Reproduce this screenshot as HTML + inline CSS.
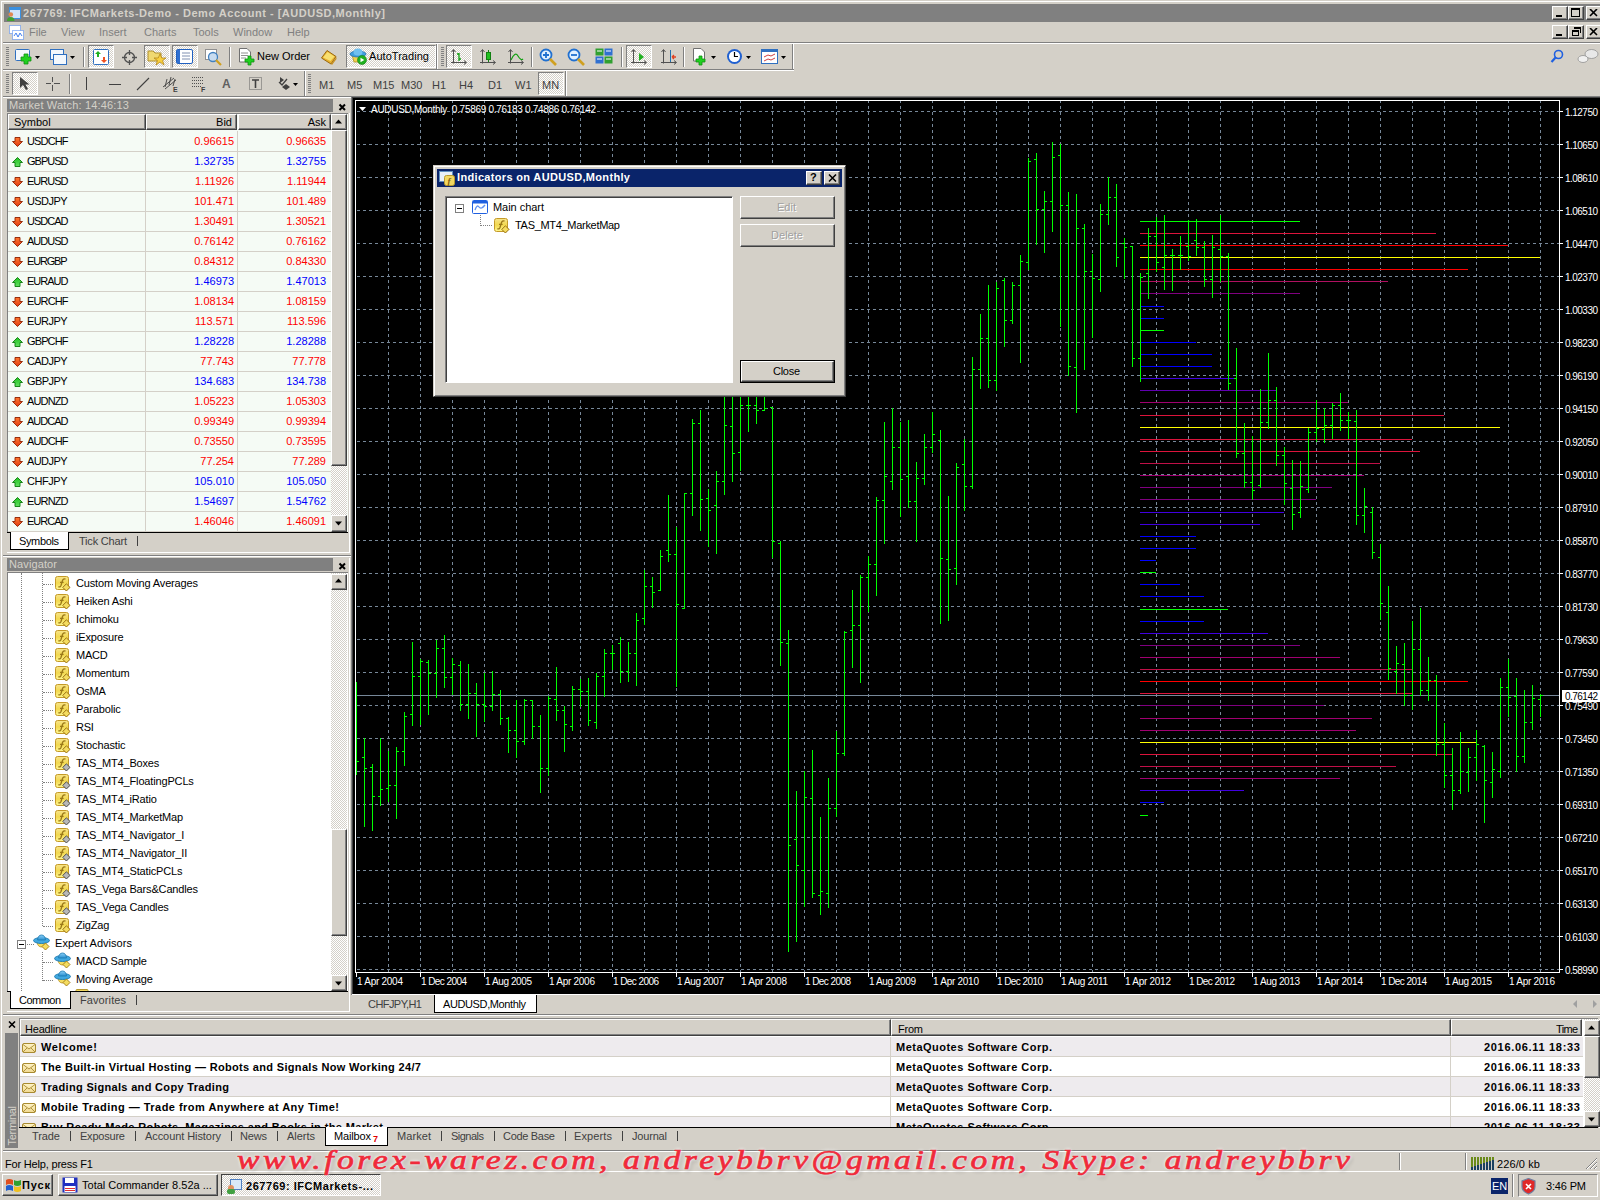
<!DOCTYPE html><html><head><meta charset="utf-8"><style>
html,body{margin:0;padding:0;}
body{width:1600px;height:1200px;position:relative;overflow:hidden;background:#d4d0c8;font-family:"Liberation Sans",sans-serif;font-size:11px;color:#000;}
.t{position:absolute;white-space:nowrap;line-height:13px;}
svg{position:absolute;}
</style></head><body>
<svg width="0" height="0" style="position:absolute"><defs>
<linearGradient id="gy" x1="0" y1="0" x2="0" y2="1"><stop offset="0" stop-color="#f8e48a"/><stop offset="0.5" stop-color="#f2d850"/><stop offset="1" stop-color="#fff890"/></linearGradient>
<linearGradient id="gr" x1="0" y1="0" x2="0" y2="1"><stop offset="0" stop-color="#ff7a30"/><stop offset="1" stop-color="#e03a10"/></linearGradient>
<linearGradient id="gg" x1="0" y1="0" x2="0" y2="1"><stop offset="0" stop-color="#20c020"/><stop offset="1" stop-color="#60e060"/></linearGradient>
<linearGradient id="gb" x1="0" y1="0" x2="0" y2="1"><stop offset="0" stop-color="#8cd0f8"/><stop offset="1" stop-color="#2a90d0"/></linearGradient>
<linearGradient id="ge" x1="0" y1="0" x2="0" y2="1"><stop offset="0" stop-color="#fff4c8"/><stop offset="1" stop-color="#f0d890"/></linearGradient>
</defs></svg>
<div style="position:absolute;left:0px;top:0px;width:1600px;height:1px;background:#d4d0c8;"></div>
<div style="position:absolute;left:1px;top:1px;width:1599px;height:1px;background:#fff;"></div>
<div style="position:absolute;left:1px;top:1px;width:1px;height:1170px;background:#fff;"></div>
<div style="position:absolute;left:4px;top:4px;width:1596px;height:18px;background:#808080;"></div>
<svg style="left:7px;top:6px" width="15" height="15"><rect x="2.5" y="1.5" width="11" height="11" fill="#d0e4f8" stroke="#3a90e0"/><rect x="3" y="2" width="10" height="2" fill="#3a90e0"/><circle cx="3.8" cy="8.5" r="2.3" fill="#e08850"/><path d="M0 15Q0 11 3.8 11Q7.5 11 7.5 15Z" fill="#40a030"/></svg>
<svg style="left:9px;top:25px" width="15" height="15"><rect x="0.5" y="0.5" width="11" height="8" fill="#fff" stroke="#4080f0" stroke-dasharray="1 1"/><rect x="3.5" y="5.5" width="11" height="9" fill="#fff" stroke="#4080f0" stroke-dasharray="1 1"/><path d="M5 11L7 8L9 12L11 8L13 11" stroke="#4080f0" fill="none"/></svg>
<div class="t" style="left:23px;top:7px;letter-spacing:0.512px;font-weight:bold;color:#d4d0c8;">267769: IFCMarkets-Demo - Demo Account - [AUDUSD,Monthly]</div>
<div style="position:absolute;left:1552px;top:6px;width:16px;height:14px;background:#d4d0c8;border-top:1px solid #fff;border-left:1px solid #fff;border-right:1px solid #404040;border-bottom:1px solid #404040;box-sizing:border-box;box-shadow:inset -1px -1px 0 #808080;"></div>
<div style="position:absolute;left:1568px;top:6px;width:16px;height:14px;background:#d4d0c8;border-top:1px solid #fff;border-left:1px solid #fff;border-right:1px solid #404040;border-bottom:1px solid #404040;box-sizing:border-box;box-shadow:inset -1px -1px 0 #808080;"></div>
<div style="position:absolute;left:1586px;top:6px;width:16px;height:14px;background:#d4d0c8;border-top:1px solid #fff;border-left:1px solid #fff;border-right:1px solid #404040;border-bottom:1px solid #404040;box-sizing:border-box;box-shadow:inset -1px -1px 0 #808080;"></div>
<div style="position:absolute;left:1556px;top:15px;width:6px;height:2px;background:#000;"></div>
<div style="position:absolute;left:1571px;top:8px;width:9px;height:9px;border:1px solid #000;border-top-width:2px;box-sizing:border-box;"></div>
<svg style="left:1589px;top:9px" width="10" height="8"><path d="M1 0L8 7M8 0L1 7" stroke="#000" stroke-width="1.6"/></svg>
<div class="t" style="left:29px;top:26px;color:#808080;">File</div>
<div class="t" style="left:61px;top:26px;color:#808080;">View</div>
<div class="t" style="left:99px;top:26px;color:#808080;">Insert</div>
<div class="t" style="left:144px;top:26px;color:#808080;">Charts</div>
<div class="t" style="left:193px;top:26px;color:#808080;">Tools</div>
<div class="t" style="left:233px;top:26px;color:#808080;">Window</div>
<div class="t" style="left:287px;top:26px;color:#808080;">Help</div>
<div style="position:absolute;left:1552px;top:25px;width:16px;height:14px;background:#d4d0c8;border-top:1px solid #fff;border-left:1px solid #fff;border-right:1px solid #404040;border-bottom:1px solid #404040;box-sizing:border-box;box-shadow:inset -1px -1px 0 #808080;"></div>
<div style="position:absolute;left:1568px;top:25px;width:16px;height:14px;background:#d4d0c8;border-top:1px solid #fff;border-left:1px solid #fff;border-right:1px solid #404040;border-bottom:1px solid #404040;box-sizing:border-box;box-shadow:inset -1px -1px 0 #808080;"></div>
<div style="position:absolute;left:1586px;top:25px;width:16px;height:14px;background:#d4d0c8;border-top:1px solid #fff;border-left:1px solid #fff;border-right:1px solid #404040;border-bottom:1px solid #404040;box-sizing:border-box;box-shadow:inset -1px -1px 0 #808080;"></div>
<div style="position:absolute;left:1556px;top:34px;width:6px;height:2px;background:#000;"></div>
<div style="position:absolute;left:1572px;top:30px;width:7px;height:6px;border:1px solid #000;border-top-width:2px;box-sizing:border-box;"></div>
<div style="position:absolute;left:1574px;top:27px;width:7px;height:6px;border:1px solid #000;border-top-width:2px;box-sizing:border-box;border-left:none;border-bottom:none;"></div>
<svg style="left:1589px;top:28px" width="10" height="8"><path d="M1 0L8 7M8 0L1 7" stroke="#000" stroke-width="1.6"/></svg>
<div style="position:absolute;left:3px;top:42px;width:1597px;height:1px;background:#808080;"></div>
<div style="position:absolute;left:3px;top:43px;width:1597px;height:1px;background:#fff;"></div>
<div style="position:absolute;left:3px;top:69px;width:791px;height:1px;background:#808080;"></div>
<div style="position:absolute;left:3px;top:70px;width:791px;height:1px;background:#fff;"></div>
<div style="position:absolute;left:3px;top:96px;width:1597px;height:1px;background:#808080;"></div>
<div style="position:absolute;left:3px;top:97px;width:349px;height:1px;background:#fff;"></div>
<div style="position:absolute;left:3px;top:98px;width:349px;height:456px;background:#d4d0c8;"></div>
<div style="position:absolute;left:7px;top:99px;width:326px;height:13px;background:#808080;"></div>
<div class="t" style="left:9px;top:99px;letter-spacing:0.168px;color:#d4d0c8;">Market Watch: 14:46:13</div>
<svg style="left:338px;top:103px" width="9" height="8"><path d="M1.5 1.5L7 7M7 1.5L1.5 7" stroke="#000" stroke-width="2"/></svg>
<div style="position:absolute;left:7px;top:113px;width:341px;height:419px;background:#f5fbf5;border-left:1px solid #808080;border-top:1px solid #808080;box-sizing:border-box;"></div>
<div style="position:absolute;left:8px;top:114px;width:138px;height:16px;background:#d4d0c8;border-top:1px solid #fff;border-left:1px solid #fff;border-right:1px solid #404040;border-bottom:1px solid #404040;box-sizing:border-box;box-shadow:inset -1px -1px 0 #808080;"></div>
<div style="position:absolute;left:146px;top:114px;width:91px;height:16px;background:#d4d0c8;border-top:1px solid #fff;border-left:1px solid #fff;border-right:1px solid #404040;border-bottom:1px solid #404040;box-sizing:border-box;box-shadow:inset -1px -1px 0 #808080;"></div>
<div style="position:absolute;left:238px;top:114px;width:93px;height:16px;background:#d4d0c8;border-top:1px solid #fff;border-left:1px solid #fff;border-right:1px solid #404040;border-bottom:1px solid #404040;box-sizing:border-box;box-shadow:inset -1px -1px 0 #808080;"></div>
<div class="t" style="left:14px;top:116px;">Symbol</div>
<div class="t" style="left:146px;top:116px;width:86px;text-align:right;">Bid</div>
<div class="t" style="left:238px;top:116px;width:88px;text-align:right;">Ask</div>
<div style="position:absolute;left:8px;top:151px;width:323px;height:1px;background:#d4d0c8;"></div>
<svg style="left:12px;top:137px" width="12" height="11"><path d="M5.5 9.5L10.5 4.5H8V0.5H3V4.5H0.5Z" fill="url(#gr)" stroke="#902000" stroke-width="0.9"/></svg>
<div class="t" style="left:27px;top:135px;letter-spacing:-0.863px;">USDCHF</div>
<div class="t" style="left:146px;top:135px;width:88px;text-align:right;color:#ff0000;">0.96615</div>
<div class="t" style="left:238px;top:135px;width:88px;text-align:right;color:#ff0000;">0.96635</div>
<div style="position:absolute;left:8px;top:171px;width:323px;height:1px;background:#d4d0c8;"></div>
<svg style="left:12px;top:157px" width="12" height="11"><path d="M5.5 0.5L10.5 5.5H8V9.5H3V5.5H0.5Z" fill="url(#gg)" stroke="#0a7a0a" stroke-width="0.9"/></svg>
<div class="t" style="left:27px;top:155px;letter-spacing:-0.994px;">GBPUSD</div>
<div class="t" style="left:146px;top:155px;width:88px;text-align:right;color:#0000ff;">1.32735</div>
<div class="t" style="left:238px;top:155px;width:88px;text-align:right;color:#0000ff;">1.32755</div>
<div style="position:absolute;left:8px;top:191px;width:323px;height:1px;background:#d4d0c8;"></div>
<svg style="left:12px;top:177px" width="12" height="11"><path d="M5.5 9.5L10.5 4.5H8V0.5H3V4.5H0.5Z" fill="url(#gr)" stroke="#902000" stroke-width="0.9"/></svg>
<div class="t" style="left:27px;top:175px;letter-spacing:-0.988px;">EURUSD</div>
<div class="t" style="left:146px;top:175px;width:88px;text-align:right;color:#ff0000;">1.11926</div>
<div class="t" style="left:238px;top:175px;width:88px;text-align:right;color:#ff0000;">1.11944</div>
<div style="position:absolute;left:8px;top:211px;width:323px;height:1px;background:#d4d0c8;"></div>
<svg style="left:12px;top:197px" width="12" height="11"><path d="M5.5 9.5L10.5 4.5H8V0.5H3V4.5H0.5Z" fill="url(#gr)" stroke="#902000" stroke-width="0.9"/></svg>
<div class="t" style="left:27px;top:195px;letter-spacing:-0.581px;">USDJPY</div>
<div class="t" style="left:146px;top:195px;width:88px;text-align:right;color:#ff0000;">101.471</div>
<div class="t" style="left:238px;top:195px;width:88px;text-align:right;color:#ff0000;">101.489</div>
<div style="position:absolute;left:8px;top:231px;width:323px;height:1px;background:#d4d0c8;"></div>
<svg style="left:12px;top:217px" width="12" height="11"><path d="M5.5 9.5L10.5 4.5H8V0.5H3V4.5H0.5Z" fill="url(#gr)" stroke="#902000" stroke-width="0.9"/></svg>
<div class="t" style="left:27px;top:215px;letter-spacing:-0.988px;">USDCAD</div>
<div class="t" style="left:146px;top:215px;width:88px;text-align:right;color:#ff0000;">1.30491</div>
<div class="t" style="left:238px;top:215px;width:88px;text-align:right;color:#ff0000;">1.30521</div>
<div style="position:absolute;left:8px;top:251px;width:323px;height:1px;background:#d4d0c8;"></div>
<svg style="left:12px;top:237px" width="12" height="11"><path d="M5.5 9.5L10.5 4.5H8V0.5H3V4.5H0.5Z" fill="url(#gr)" stroke="#902000" stroke-width="0.9"/></svg>
<div class="t" style="left:27px;top:235px;letter-spacing:-0.988px;">AUDUSD</div>
<div class="t" style="left:146px;top:235px;width:88px;text-align:right;color:#ff0000;">0.76142</div>
<div class="t" style="left:238px;top:235px;width:88px;text-align:right;color:#ff0000;">0.76162</div>
<div style="position:absolute;left:8px;top:271px;width:323px;height:1px;background:#d4d0c8;"></div>
<svg style="left:12px;top:257px" width="12" height="11"><path d="M5.5 9.5L10.5 4.5H8V0.5H3V4.5H0.5Z" fill="url(#gr)" stroke="#902000" stroke-width="0.9"/></svg>
<div class="t" style="left:27px;top:255px;letter-spacing:-1.194px;">EURGBP</div>
<div class="t" style="left:146px;top:255px;width:88px;text-align:right;color:#ff0000;">0.84312</div>
<div class="t" style="left:238px;top:255px;width:88px;text-align:right;color:#ff0000;">0.84330</div>
<div style="position:absolute;left:8px;top:291px;width:323px;height:1px;background:#d4d0c8;"></div>
<svg style="left:12px;top:277px" width="12" height="11"><path d="M5.5 0.5L10.5 5.5H8V9.5H3V5.5H0.5Z" fill="url(#gg)" stroke="#0a7a0a" stroke-width="0.9"/></svg>
<div class="t" style="left:27px;top:275px;letter-spacing:-0.988px;">EURAUD</div>
<div class="t" style="left:146px;top:275px;width:88px;text-align:right;color:#0000ff;">1.46973</div>
<div class="t" style="left:238px;top:275px;width:88px;text-align:right;color:#0000ff;">1.47013</div>
<div style="position:absolute;left:8px;top:311px;width:323px;height:1px;background:#d4d0c8;"></div>
<svg style="left:12px;top:297px" width="12" height="11"><path d="M5.5 9.5L10.5 4.5H8V0.5H3V4.5H0.5Z" fill="url(#gr)" stroke="#902000" stroke-width="0.9"/></svg>
<div class="t" style="left:27px;top:295px;letter-spacing:-0.863px;">EURCHF</div>
<div class="t" style="left:146px;top:295px;width:88px;text-align:right;color:#ff0000;">1.08134</div>
<div class="t" style="left:238px;top:295px;width:88px;text-align:right;color:#ff0000;">1.08159</div>
<div style="position:absolute;left:8px;top:331px;width:323px;height:1px;background:#d4d0c8;"></div>
<svg style="left:12px;top:317px" width="12" height="11"><path d="M5.5 9.5L10.5 4.5H8V0.5H3V4.5H0.5Z" fill="url(#gr)" stroke="#902000" stroke-width="0.9"/></svg>
<div class="t" style="left:27px;top:315px;letter-spacing:-0.581px;">EURJPY</div>
<div class="t" style="left:146px;top:315px;width:88px;text-align:right;color:#ff0000;">113.571</div>
<div class="t" style="left:238px;top:315px;width:88px;text-align:right;color:#ff0000;">113.596</div>
<div style="position:absolute;left:8px;top:351px;width:323px;height:1px;background:#d4d0c8;"></div>
<svg style="left:12px;top:337px" width="12" height="11"><path d="M5.5 0.5L10.5 5.5H8V9.5H3V5.5H0.5Z" fill="url(#gg)" stroke="#0a7a0a" stroke-width="0.9"/></svg>
<div class="t" style="left:27px;top:335px;letter-spacing:-0.869px;">GBPCHF</div>
<div class="t" style="left:146px;top:335px;width:88px;text-align:right;color:#0000ff;">1.28228</div>
<div class="t" style="left:238px;top:335px;width:88px;text-align:right;color:#0000ff;">1.28288</div>
<div style="position:absolute;left:8px;top:371px;width:323px;height:1px;background:#d4d0c8;"></div>
<svg style="left:12px;top:357px" width="12" height="11"><path d="M5.5 9.5L10.5 4.5H8V0.5H3V4.5H0.5Z" fill="url(#gr)" stroke="#902000" stroke-width="0.9"/></svg>
<div class="t" style="left:27px;top:355px;letter-spacing:-0.581px;">CADJPY</div>
<div class="t" style="left:146px;top:355px;width:88px;text-align:right;color:#ff0000;">77.743</div>
<div class="t" style="left:238px;top:355px;width:88px;text-align:right;color:#ff0000;">77.778</div>
<div style="position:absolute;left:8px;top:391px;width:323px;height:1px;background:#d4d0c8;"></div>
<svg style="left:12px;top:377px" width="12" height="11"><path d="M5.5 0.5L10.5 5.5H8V9.5H3V5.5H0.5Z" fill="url(#gg)" stroke="#0a7a0a" stroke-width="0.9"/></svg>
<div class="t" style="left:27px;top:375px;letter-spacing:-0.588px;">GBPJPY</div>
<div class="t" style="left:146px;top:375px;width:88px;text-align:right;color:#0000ff;">134.683</div>
<div class="t" style="left:238px;top:375px;width:88px;text-align:right;color:#0000ff;">134.738</div>
<div style="position:absolute;left:8px;top:411px;width:323px;height:1px;background:#d4d0c8;"></div>
<svg style="left:12px;top:397px" width="12" height="11"><path d="M5.5 9.5L10.5 4.5H8V0.5H3V4.5H0.5Z" fill="url(#gr)" stroke="#902000" stroke-width="0.9"/></svg>
<div class="t" style="left:27px;top:395px;letter-spacing:-0.863px;">AUDNZD</div>
<div class="t" style="left:146px;top:395px;width:88px;text-align:right;color:#ff0000;">1.05223</div>
<div class="t" style="left:238px;top:395px;width:88px;text-align:right;color:#ff0000;">1.05303</div>
<div style="position:absolute;left:8px;top:431px;width:323px;height:1px;background:#d4d0c8;"></div>
<svg style="left:12px;top:417px" width="12" height="11"><path d="M5.5 9.5L10.5 4.5H8V0.5H3V4.5H0.5Z" fill="url(#gr)" stroke="#902000" stroke-width="0.9"/></svg>
<div class="t" style="left:27px;top:415px;letter-spacing:-0.988px;">AUDCAD</div>
<div class="t" style="left:146px;top:415px;width:88px;text-align:right;color:#ff0000;">0.99349</div>
<div class="t" style="left:238px;top:415px;width:88px;text-align:right;color:#ff0000;">0.99394</div>
<div style="position:absolute;left:8px;top:451px;width:323px;height:1px;background:#d4d0c8;"></div>
<svg style="left:12px;top:437px" width="12" height="11"><path d="M5.5 9.5L10.5 4.5H8V0.5H3V4.5H0.5Z" fill="url(#gr)" stroke="#902000" stroke-width="0.9"/></svg>
<div class="t" style="left:27px;top:435px;letter-spacing:-0.863px;">AUDCHF</div>
<div class="t" style="left:146px;top:435px;width:88px;text-align:right;color:#ff0000;">0.73550</div>
<div class="t" style="left:238px;top:435px;width:88px;text-align:right;color:#ff0000;">0.73595</div>
<div style="position:absolute;left:8px;top:471px;width:323px;height:1px;background:#d4d0c8;"></div>
<svg style="left:12px;top:457px" width="12" height="11"><path d="M5.5 9.5L10.5 4.5H8V0.5H3V4.5H0.5Z" fill="url(#gr)" stroke="#902000" stroke-width="0.9"/></svg>
<div class="t" style="left:27px;top:455px;letter-spacing:-0.581px;">AUDJPY</div>
<div class="t" style="left:146px;top:455px;width:88px;text-align:right;color:#ff0000;">77.254</div>
<div class="t" style="left:238px;top:455px;width:88px;text-align:right;color:#ff0000;">77.289</div>
<div style="position:absolute;left:8px;top:491px;width:323px;height:1px;background:#d4d0c8;"></div>
<svg style="left:12px;top:477px" width="12" height="11"><path d="M5.5 0.5L10.5 5.5H8V9.5H3V5.5H0.5Z" fill="url(#gg)" stroke="#0a7a0a" stroke-width="0.9"/></svg>
<div class="t" style="left:27px;top:475px;letter-spacing:-0.456px;">CHFJPY</div>
<div class="t" style="left:146px;top:475px;width:88px;text-align:right;color:#0000ff;">105.010</div>
<div class="t" style="left:238px;top:475px;width:88px;text-align:right;color:#0000ff;">105.050</div>
<div style="position:absolute;left:8px;top:511px;width:323px;height:1px;background:#d4d0c8;"></div>
<svg style="left:12px;top:497px" width="12" height="11"><path d="M5.5 0.5L10.5 5.5H8V9.5H3V5.5H0.5Z" fill="url(#gg)" stroke="#0a7a0a" stroke-width="0.9"/></svg>
<div class="t" style="left:27px;top:495px;letter-spacing:-0.863px;">EURNZD</div>
<div class="t" style="left:146px;top:495px;width:88px;text-align:right;color:#0000ff;">1.54697</div>
<div class="t" style="left:238px;top:495px;width:88px;text-align:right;color:#0000ff;">1.54762</div>
<div style="position:absolute;left:8px;top:531px;width:323px;height:1px;background:#d4d0c8;"></div>
<svg style="left:12px;top:517px" width="12" height="11"><path d="M5.5 9.5L10.5 4.5H8V0.5H3V4.5H0.5Z" fill="url(#gr)" stroke="#902000" stroke-width="0.9"/></svg>
<div class="t" style="left:27px;top:515px;letter-spacing:-0.988px;">EURCAD</div>
<div class="t" style="left:146px;top:515px;width:88px;text-align:right;color:#ff0000;">1.46046</div>
<div class="t" style="left:238px;top:515px;width:88px;text-align:right;color:#ff0000;">1.46091</div>
<div style="position:absolute;left:145px;top:131px;width:1px;height:400px;background:#d4d0c8;"></div>
<div style="position:absolute;left:237px;top:131px;width:1px;height:400px;background:#d4d0c8;"></div>
<div style="position:absolute;left:331px;top:114px;width:16px;height:417px;background-color:#d4d0c8;background-image:linear-gradient(45deg,#fff 25%,transparent 25%,transparent 75%,#fff 75%),linear-gradient(45deg,#fff 25%,transparent 25%,transparent 75%,#fff 75%);background-size:2px 2px;background-position:0 0,1px 1px;"></div>
<div style="position:absolute;left:331px;top:114px;width:16px;height:16px;background:#d4d0c8;border-top:1px solid #fff;border-left:1px solid #fff;border-right:1px solid #404040;border-bottom:1px solid #404040;box-sizing:border-box;box-shadow:inset -1px -1px 0 #808080;"></div>
<svg style="left:335px;top:119px" width="8" height="5"><path d="M0 4.5H7L3.5 0.5Z" fill="#000"/></svg>
<div style="position:absolute;left:331px;top:130px;width:16px;height:336px;background:#d4d0c8;border-top:1px solid #fff;border-left:1px solid #fff;border-right:1px solid #404040;border-bottom:1px solid #404040;box-sizing:border-box;box-shadow:inset -1px -1px 0 #808080;"></div>
<div style="position:absolute;left:331px;top:515px;width:16px;height:17px;background:#d4d0c8;border-top:1px solid #fff;border-left:1px solid #fff;border-right:1px solid #404040;border-bottom:1px solid #404040;box-sizing:border-box;box-shadow:inset -1px -1px 0 #808080;"></div>
<svg style="left:335px;top:521px" width="8" height="5"><path d="M0 0.5H7L3.5 4.5Z" fill="#000"/></svg>
<div style="position:absolute;left:7px;top:532px;width:341px;height:1px;background:#000;"></div>
<div style="position:absolute;left:10px;top:532px;width:59px;height:18px;background:#fff;border:1px solid #000;border-top:none;box-sizing:border-box;"></div>
<div class="t" style="left:19px;top:535px;letter-spacing:-0.365px;">Symbols</div>
<div class="t" style="left:79px;top:535px;letter-spacing:-0.191px;color:#404040;">Tick Chart</div>
<div style="position:absolute;left:137px;top:536px;width:1px;height:10px;background:#404040;"></div>
<div style="position:absolute;left:7px;top:552px;width:343px;height:1px;background:#fff;"></div>
<div style="position:absolute;left:349px;top:113px;width:1px;height:440px;background:#fff;"></div>
<div style="position:absolute;left:3px;top:555px;width:349px;height:1px;background:#808080;"></div>
<div style="position:absolute;left:3px;top:556px;width:349px;height:1px;background:#fff;"></div>
<div style="position:absolute;left:7px;top:558px;width:326px;height:13px;background:#808080;"></div>
<div class="t" style="left:9px;top:558px;letter-spacing:0.113px;color:#d4d0c8;">Navigator</div>
<svg style="left:338px;top:562px" width="9" height="8"><path d="M1.5 1.5L7 7M7 1.5L1.5 7" stroke="#000" stroke-width="2"/></svg>
<div style="position:absolute;left:7px;top:572px;width:341px;height:420px;background:#fff;border-left:1px solid #808080;border-top:1px solid #808080;box-sizing:border-box;"></div>
<div style="position:absolute;left:21px;top:573px;width:1px;height:366px;border-left:1px dotted #808080;"></div>
<div style="position:absolute;left:21px;top:950px;width:1px;height:41px;border-left:1px dotted #808080;"></div>
<div style="position:absolute;left:42px;top:573px;width:1px;height:353px;border-left:1px dotted #808080;"></div>
<div style="position:absolute;left:42px;top:952px;width:1px;height:29px;border-left:1px dotted #808080;"></div>
<div style="position:absolute;left:43px;top:584px;width:10px;height:1px;border-top:1px dotted #808080;"></div>
<svg style="left:54px;top:575px" width="18" height="18"><rect x="1.5" y="1.5" width="13" height="13" rx="2" fill="url(#gy)" stroke="#c49a28"/><path d="M11.5 4.2Q9.3 3.3 8.4 5.8L7 10.5Q6.3 12.6 4.4 11.6M6 7.4H9.6" stroke="#9a7818" stroke-width="1.3" fill="none"/><path d="M12.4 8.8L16 12.4L12.4 16L8.8 12.4Z" fill="#f4dc60" stroke="#9a7010" stroke-width="1"/></svg>
<div class="t" style="left:76px;top:577px;letter-spacing:-0.148px;">Custom Moving Averages</div>
<div style="position:absolute;left:43px;top:602px;width:10px;height:1px;border-top:1px dotted #808080;"></div>
<svg style="left:54px;top:593px" width="18" height="18"><rect x="1.5" y="1.5" width="13" height="13" rx="2" fill="url(#gy)" stroke="#c49a28"/><path d="M11.5 4.2Q9.3 3.3 8.4 5.8L7 10.5Q6.3 12.6 4.4 11.6M6 7.4H9.6" stroke="#9a7818" stroke-width="1.3" fill="none"/><path d="M12.4 8.8L16 12.4L12.4 16L8.8 12.4Z" fill="#f4dc60" stroke="#9a7010" stroke-width="1"/></svg>
<div class="t" style="left:76px;top:595px;letter-spacing:-0.143px;">Heiken Ashi</div>
<div style="position:absolute;left:43px;top:620px;width:10px;height:1px;border-top:1px dotted #808080;"></div>
<svg style="left:54px;top:611px" width="18" height="18"><rect x="1.5" y="1.5" width="13" height="13" rx="2" fill="url(#gy)" stroke="#c49a28"/><path d="M11.5 4.2Q9.3 3.3 8.4 5.8L7 10.5Q6.3 12.6 4.4 11.6M6 7.4H9.6" stroke="#9a7818" stroke-width="1.3" fill="none"/><path d="M12.4 8.8L16 12.4L12.4 16L8.8 12.4Z" fill="#f4dc60" stroke="#9a7010" stroke-width="1"/></svg>
<div class="t" style="left:76px;top:613px;letter-spacing:-0.154px;">Ichimoku</div>
<div style="position:absolute;left:43px;top:638px;width:10px;height:1px;border-top:1px dotted #808080;"></div>
<svg style="left:54px;top:629px" width="18" height="18"><rect x="1.5" y="1.5" width="13" height="13" rx="2" fill="url(#gy)" stroke="#c49a28"/><path d="M11.5 4.2Q9.3 3.3 8.4 5.8L7 10.5Q6.3 12.6 4.4 11.6M6 7.4H9.6" stroke="#9a7818" stroke-width="1.3" fill="none"/><path d="M12.4 8.8L16 12.4L12.4 16L8.8 12.4Z" fill="#f4dc60" stroke="#9a7010" stroke-width="1"/></svg>
<div class="t" style="left:76px;top:631px;letter-spacing:-0.150px;">iExposure</div>
<div style="position:absolute;left:43px;top:656px;width:10px;height:1px;border-top:1px dotted #808080;"></div>
<svg style="left:54px;top:647px" width="18" height="18"><rect x="1.5" y="1.5" width="13" height="13" rx="2" fill="url(#gy)" stroke="#c49a28"/><path d="M11.5 4.2Q9.3 3.3 8.4 5.8L7 10.5Q6.3 12.6 4.4 11.6M6 7.4H9.6" stroke="#9a7818" stroke-width="1.3" fill="none"/><path d="M12.4 8.8L16 12.4L12.4 16L8.8 12.4Z" fill="#f4dc60" stroke="#9a7010" stroke-width="1"/></svg>
<div class="t" style="left:76px;top:649px;letter-spacing:-0.261px;">MACD</div>
<div style="position:absolute;left:43px;top:674px;width:10px;height:1px;border-top:1px dotted #808080;"></div>
<svg style="left:54px;top:665px" width="18" height="18"><rect x="1.5" y="1.5" width="13" height="13" rx="2" fill="url(#gy)" stroke="#c49a28"/><path d="M11.5 4.2Q9.3 3.3 8.4 5.8L7 10.5Q6.3 12.6 4.4 11.6M6 7.4H9.6" stroke="#9a7818" stroke-width="1.3" fill="none"/><path d="M12.4 8.8L16 12.4L12.4 16L8.8 12.4Z" fill="#f4dc60" stroke="#9a7010" stroke-width="1"/></svg>
<div class="t" style="left:76px;top:667px;letter-spacing:-0.193px;">Momentum</div>
<div style="position:absolute;left:43px;top:692px;width:10px;height:1px;border-top:1px dotted #808080;"></div>
<svg style="left:54px;top:683px" width="18" height="18"><rect x="1.5" y="1.5" width="13" height="13" rx="2" fill="url(#gy)" stroke="#c49a28"/><path d="M11.5 4.2Q9.3 3.3 8.4 5.8L7 10.5Q6.3 12.6 4.4 11.6M6 7.4H9.6" stroke="#9a7818" stroke-width="1.3" fill="none"/><path d="M12.4 8.8L16 12.4L12.4 16L8.8 12.4Z" fill="#f4dc60" stroke="#9a7010" stroke-width="1"/></svg>
<div class="t" style="left:76px;top:685px;letter-spacing:-0.246px;">OsMA</div>
<div style="position:absolute;left:43px;top:710px;width:10px;height:1px;border-top:1px dotted #808080;"></div>
<svg style="left:54px;top:701px" width="18" height="18"><rect x="1.5" y="1.5" width="13" height="13" rx="2" fill="url(#gy)" stroke="#c49a28"/><path d="M11.5 4.2Q9.3 3.3 8.4 5.8L7 10.5Q6.3 12.6 4.4 11.6M6 7.4H9.6" stroke="#9a7818" stroke-width="1.3" fill="none"/><path d="M12.4 8.8L16 12.4L12.4 16L8.8 12.4Z" fill="#f4dc60" stroke="#9a7010" stroke-width="1"/></svg>
<div class="t" style="left:76px;top:703px;letter-spacing:-0.140px;">Parabolic</div>
<div style="position:absolute;left:43px;top:728px;width:10px;height:1px;border-top:1px dotted #808080;"></div>
<svg style="left:54px;top:719px" width="18" height="18"><rect x="1.5" y="1.5" width="13" height="13" rx="2" fill="url(#gy)" stroke="#c49a28"/><path d="M11.5 4.2Q9.3 3.3 8.4 5.8L7 10.5Q6.3 12.6 4.4 11.6M6 7.4H9.6" stroke="#9a7818" stroke-width="1.3" fill="none"/><path d="M12.4 8.8L16 12.4L12.4 16L8.8 12.4Z" fill="#f4dc60" stroke="#9a7010" stroke-width="1"/></svg>
<div class="t" style="left:76px;top:721px;letter-spacing:-0.217px;">RSI</div>
<div style="position:absolute;left:43px;top:746px;width:10px;height:1px;border-top:1px dotted #808080;"></div>
<svg style="left:54px;top:737px" width="18" height="18"><rect x="1.5" y="1.5" width="13" height="13" rx="2" fill="url(#gy)" stroke="#c49a28"/><path d="M11.5 4.2Q9.3 3.3 8.4 5.8L7 10.5Q6.3 12.6 4.4 11.6M6 7.4H9.6" stroke="#9a7818" stroke-width="1.3" fill="none"/><path d="M12.4 8.8L16 12.4L12.4 16L8.8 12.4Z" fill="#f4dc60" stroke="#9a7010" stroke-width="1"/></svg>
<div class="t" style="left:76px;top:739px;letter-spacing:-0.138px;">Stochastic</div>
<div style="position:absolute;left:43px;top:764px;width:10px;height:1px;border-top:1px dotted #808080;"></div>
<svg style="left:54px;top:755px" width="18" height="18"><rect x="1.5" y="1.5" width="13" height="13" rx="2" fill="url(#gy)" stroke="#c49a28"/><path d="M11.5 4.2Q9.3 3.3 8.4 5.8L7 10.5Q6.3 12.6 4.4 11.6M6 7.4H9.6" stroke="#9a7818" stroke-width="1.3" fill="none"/><path d="M12.4 8.8L16 12.4L12.4 16L8.8 12.4Z" fill="#b8b8b8" stroke="#505050" stroke-width="1"/></svg>
<div class="t" style="left:76px;top:757px;letter-spacing:-0.176px;">TAS_MT4_Boxes</div>
<div style="position:absolute;left:43px;top:782px;width:10px;height:1px;border-top:1px dotted #808080;"></div>
<svg style="left:54px;top:773px" width="18" height="18"><rect x="1.5" y="1.5" width="13" height="13" rx="2" fill="url(#gy)" stroke="#c49a28"/><path d="M11.5 4.2Q9.3 3.3 8.4 5.8L7 10.5Q6.3 12.6 4.4 11.6M6 7.4H9.6" stroke="#9a7818" stroke-width="1.3" fill="none"/><path d="M12.4 8.8L16 12.4L12.4 16L8.8 12.4Z" fill="#b8b8b8" stroke="#505050" stroke-width="1"/></svg>
<div class="t" style="left:76px;top:775px;letter-spacing:-0.158px;">TAS_MT4_FloatingPCLs</div>
<div style="position:absolute;left:43px;top:800px;width:10px;height:1px;border-top:1px dotted #808080;"></div>
<svg style="left:54px;top:791px" width="18" height="18"><rect x="1.5" y="1.5" width="13" height="13" rx="2" fill="url(#gy)" stroke="#c49a28"/><path d="M11.5 4.2Q9.3 3.3 8.4 5.8L7 10.5Q6.3 12.6 4.4 11.6M6 7.4H9.6" stroke="#9a7818" stroke-width="1.3" fill="none"/><path d="M12.4 8.8L16 12.4L12.4 16L8.8 12.4Z" fill="#b8b8b8" stroke="#505050" stroke-width="1"/></svg>
<div class="t" style="left:76px;top:793px;letter-spacing:-0.158px;">TAS_MT4_iRatio</div>
<div style="position:absolute;left:43px;top:818px;width:10px;height:1px;border-top:1px dotted #808080;"></div>
<svg style="left:54px;top:809px" width="18" height="18"><rect x="1.5" y="1.5" width="13" height="13" rx="2" fill="url(#gy)" stroke="#c49a28"/><path d="M11.5 4.2Q9.3 3.3 8.4 5.8L7 10.5Q6.3 12.6 4.4 11.6M6 7.4H9.6" stroke="#9a7818" stroke-width="1.3" fill="none"/><path d="M12.4 8.8L16 12.4L12.4 16L8.8 12.4Z" fill="#b8b8b8" stroke="#505050" stroke-width="1"/></svg>
<div class="t" style="left:76px;top:811px;letter-spacing:-0.170px;">TAS_MT4_MarketMap</div>
<div style="position:absolute;left:43px;top:836px;width:10px;height:1px;border-top:1px dotted #808080;"></div>
<svg style="left:54px;top:827px" width="18" height="18"><rect x="1.5" y="1.5" width="13" height="13" rx="2" fill="url(#gy)" stroke="#c49a28"/><path d="M11.5 4.2Q9.3 3.3 8.4 5.8L7 10.5Q6.3 12.6 4.4 11.6M6 7.4H9.6" stroke="#9a7818" stroke-width="1.3" fill="none"/><path d="M12.4 8.8L16 12.4L12.4 16L8.8 12.4Z" fill="#b8b8b8" stroke="#505050" stroke-width="1"/></svg>
<div class="t" style="left:76px;top:829px;letter-spacing:-0.153px;">TAS_MT4_Navigator_I</div>
<div style="position:absolute;left:43px;top:854px;width:10px;height:1px;border-top:1px dotted #808080;"></div>
<svg style="left:54px;top:845px" width="18" height="18"><rect x="1.5" y="1.5" width="13" height="13" rx="2" fill="url(#gy)" stroke="#c49a28"/><path d="M11.5 4.2Q9.3 3.3 8.4 5.8L7 10.5Q6.3 12.6 4.4 11.6M6 7.4H9.6" stroke="#9a7818" stroke-width="1.3" fill="none"/><path d="M12.4 8.8L16 12.4L12.4 16L8.8 12.4Z" fill="#b8b8b8" stroke="#505050" stroke-width="1"/></svg>
<div class="t" style="left:76px;top:847px;letter-spacing:-0.149px;">TAS_MT4_Navigator_II</div>
<div style="position:absolute;left:43px;top:872px;width:10px;height:1px;border-top:1px dotted #808080;"></div>
<svg style="left:54px;top:863px" width="18" height="18"><rect x="1.5" y="1.5" width="13" height="13" rx="2" fill="url(#gy)" stroke="#c49a28"/><path d="M11.5 4.2Q9.3 3.3 8.4 5.8L7 10.5Q6.3 12.6 4.4 11.6M6 7.4H9.6" stroke="#9a7818" stroke-width="1.3" fill="none"/><path d="M12.4 8.8L16 12.4L12.4 16L8.8 12.4Z" fill="#b8b8b8" stroke="#505050" stroke-width="1"/></svg>
<div class="t" style="left:76px;top:865px;letter-spacing:-0.159px;">TAS_MT4_StaticPCLs</div>
<div style="position:absolute;left:43px;top:890px;width:10px;height:1px;border-top:1px dotted #808080;"></div>
<svg style="left:54px;top:881px" width="18" height="18"><rect x="1.5" y="1.5" width="13" height="13" rx="2" fill="url(#gy)" stroke="#c49a28"/><path d="M11.5 4.2Q9.3 3.3 8.4 5.8L7 10.5Q6.3 12.6 4.4 11.6M6 7.4H9.6" stroke="#9a7818" stroke-width="1.3" fill="none"/><path d="M12.4 8.8L16 12.4L12.4 16L8.8 12.4Z" fill="#b8b8b8" stroke="#505050" stroke-width="1"/></svg>
<div class="t" style="left:76px;top:883px;letter-spacing:-0.155px;">TAS_Vega Bars&amp;Candles</div>
<div style="position:absolute;left:43px;top:908px;width:10px;height:1px;border-top:1px dotted #808080;"></div>
<svg style="left:54px;top:899px" width="18" height="18"><rect x="1.5" y="1.5" width="13" height="13" rx="2" fill="url(#gy)" stroke="#c49a28"/><path d="M11.5 4.2Q9.3 3.3 8.4 5.8L7 10.5Q6.3 12.6 4.4 11.6M6 7.4H9.6" stroke="#9a7818" stroke-width="1.3" fill="none"/><path d="M12.4 8.8L16 12.4L12.4 16L8.8 12.4Z" fill="#b8b8b8" stroke="#505050" stroke-width="1"/></svg>
<div class="t" style="left:76px;top:901px;letter-spacing:-0.157px;">TAS_Vega Candles</div>
<div style="position:absolute;left:43px;top:926px;width:10px;height:1px;border-top:1px dotted #808080;"></div>
<svg style="left:54px;top:917px" width="18" height="18"><rect x="1.5" y="1.5" width="13" height="13" rx="2" fill="url(#gy)" stroke="#c49a28"/><path d="M11.5 4.2Q9.3 3.3 8.4 5.8L7 10.5Q6.3 12.6 4.4 11.6M6 7.4H9.6" stroke="#9a7818" stroke-width="1.3" fill="none"/><path d="M12.4 8.8L16 12.4L12.4 16L8.8 12.4Z" fill="#f4dc60" stroke="#9a7010" stroke-width="1"/></svg>
<div class="t" style="left:76px;top:919px;letter-spacing:-0.166px;">ZigZag</div>
<div style="position:absolute;left:17px;top:940px;width:9px;height:9px;background:#fff;border:1px solid #808080;box-sizing:border-box;"></div>
<div style="position:absolute;left:19px;top:944px;width:5px;height:1px;background:#000;"></div>
<div style="position:absolute;left:27px;top:944px;width:7px;height:1px;border-top:1px dotted #808080;"></div>
<svg style="left:33px;top:934px" width="18" height="17"><path d="M4 8.5L13 8.5Q12 13 8.5 13Q5 13 4 8.5Z" fill="#f4dc60" stroke="#b89020" stroke-width="0.8"/><ellipse cx="8.5" cy="6.5" rx="8" ry="3" fill="#40a8e0" stroke="#1a78b0" stroke-width="0.9"/><path d="M4.5 6Q5 1 8.5 1Q12 1 12.5 6Z" fill="url(#gb)" stroke="#1a78b0" stroke-width="0.8"/><path d="M12.5 9L16 12.5L12.5 16L9 12.5Z" fill="#f4dc60" stroke="#a07810" stroke-width="0.9"/></svg>
<div class="t" style="left:55px;top:937px;letter-spacing:0.039px;">Expert Advisors</div>
<div style="position:absolute;left:43px;top:962px;width:10px;height:1px;border-top:1px dotted #808080;"></div>
<svg style="left:54px;top:952px" width="18" height="17"><path d="M4 8.5L13 8.5Q12 13 8.5 13Q5 13 4 8.5Z" fill="#f4dc60" stroke="#b89020" stroke-width="0.8"/><ellipse cx="8.5" cy="6.5" rx="8" ry="3" fill="#40a8e0" stroke="#1a78b0" stroke-width="0.9"/><path d="M4.5 6Q5 1 8.5 1Q12 1 12.5 6Z" fill="url(#gb)" stroke="#1a78b0" stroke-width="0.8"/><path d="M12.5 9L16 12.5L12.5 16L9 12.5Z" fill="#f4dc60" stroke="#a07810" stroke-width="0.9"/></svg>
<div class="t" style="left:76px;top:955px;letter-spacing:-0.179px;">MACD Sample</div>
<div style="position:absolute;left:43px;top:980px;width:10px;height:1px;border-top:1px dotted #808080;"></div>
<svg style="left:54px;top:970px" width="18" height="17"><path d="M4 8.5L13 8.5Q12 13 8.5 13Q5 13 4 8.5Z" fill="#f4dc60" stroke="#b89020" stroke-width="0.8"/><ellipse cx="8.5" cy="6.5" rx="8" ry="3" fill="#40a8e0" stroke="#1a78b0" stroke-width="0.9"/><path d="M4.5 6Q5 1 8.5 1Q12 1 12.5 6Z" fill="url(#gb)" stroke="#1a78b0" stroke-width="0.8"/><path d="M12.5 9L16 12.5L12.5 16L9 12.5Z" fill="#f4dc60" stroke="#a07810" stroke-width="0.9"/></svg>
<div class="t" style="left:76px;top:973px;letter-spacing:-0.149px;">Moving Average</div>
<svg style="left:75px;top:989px" width="14" height="3"><path d="M1 3V1.5Q1 0.5 2 0.5H12Q13 0.5 13 1.5V3" fill="#f2d860" stroke="#b89a30"/></svg>
<div style="position:absolute;left:331px;top:573px;width:16px;height:418px;background-color:#d4d0c8;background-image:linear-gradient(45deg,#fff 25%,transparent 25%,transparent 75%,#fff 75%),linear-gradient(45deg,#fff 25%,transparent 25%,transparent 75%,#fff 75%);background-size:2px 2px;background-position:0 0,1px 1px;"></div>
<div style="position:absolute;left:331px;top:574px;width:16px;height:16px;background:#d4d0c8;border-top:1px solid #fff;border-left:1px solid #fff;border-right:1px solid #404040;border-bottom:1px solid #404040;box-sizing:border-box;box-shadow:inset -1px -1px 0 #808080;"></div>
<svg style="left:335px;top:578px" width="8" height="5"><path d="M0 4.5H7L3.5 0.5Z" fill="#000"/></svg>
<div style="position:absolute;left:331px;top:829px;width:16px;height:107px;background:#d4d0c8;border-top:1px solid #fff;border-left:1px solid #fff;border-right:1px solid #404040;border-bottom:1px solid #404040;box-sizing:border-box;box-shadow:inset -1px -1px 0 #808080;"></div>
<div style="position:absolute;left:331px;top:975px;width:16px;height:16px;background:#d4d0c8;border-top:1px solid #fff;border-left:1px solid #fff;border-right:1px solid #404040;border-bottom:1px solid #404040;box-sizing:border-box;box-shadow:inset -1px -1px 0 #808080;"></div>
<svg style="left:335px;top:981px" width="8" height="5"><path d="M0 0.5H7L3.5 4.5Z" fill="#000"/></svg>
<div style="position:absolute;left:7px;top:991px;width:341px;height:1px;background:#000;"></div>
<div style="position:absolute;left:10px;top:991px;width:61px;height:18px;background:#fff;border:1px solid #000;border-top:none;box-sizing:border-box;"></div>
<div class="t" style="left:19px;top:994px;letter-spacing:-0.525px;">Common</div>
<div class="t" style="left:80px;top:994px;letter-spacing:0.094px;color:#404040;">Favorites</div>
<div style="position:absolute;left:136px;top:995px;width:1px;height:10px;background:#404040;"></div>
<div style="position:absolute;left:7px;top:1011px;width:343px;height:1px;background:#fff;"></div>
<div style="position:absolute;left:349px;top:558px;width:1px;height:454px;background:#fff;"></div>
<div style="position:absolute;left:3px;top:1014px;width:1597px;height:1px;background:#808080;"></div>
<div style="position:absolute;left:3px;top:1015px;width:1597px;height:1px;background:#fff;"></div>
<div style="position:absolute;left:351px;top:96px;width:1px;height:899px;background:#808080;"></div>
<div style="position:absolute;left:352px;top:97px;width:1248px;height:898px;background:#000;border-left:1px solid #404040;border-top:1px solid #404040;box-sizing:border-box;"></div>
<svg style="left:352px;top:98px" width="1248" height="897" shape-rendering="crispEdges"><path d="M5 13.5H1207M5 46.5H1207M5 79.5H1207M5 112.5H1207M5 145.5H1207M5 178.5H1207M5 211.5H1207M5 244.5H1207M5 277.5H1207M5 310.5H1207M5 343.5H1207M5 376.5H1207M5 409.5H1207M5 442.5H1207M5 475.5H1207M5 508.5H1207M5 541.5H1207M5 574.5H1207M5 607.5H1207M5 640.5H1207M5 673.5H1207M5 706.5H1207M5 739.5H1207M5 772.5H1207M5 805.5H1207M5 838.5H1207M5 871.5H1207M36.5 2V874M68.5 2V874M100.5 2V874M132.5 2V874M164.5 2V874M196.5 2V874M228.5 2V874M260.5 2V874M292.5 2V874M324.5 2V874M356.5 2V874M388.5 2V874M420.5 2V874M452.5 2V874M484.5 2V874M516.5 2V874M548.5 2V874M580.5 2V874M612.5 2V874M644.5 2V874M676.5 2V874M708.5 2V874M740.5 2V874M772.5 2V874M804.5 2V874M836.5 2V874M868.5 2V874M900.5 2V874M932.5 2V874M964.5 2V874M996.5 2V874M1028.5 2V874M1060.5 2V874M1092.5 2V874M1124.5 2V874M1156.5 2V874M1188.5 2V874" stroke="#778899" stroke-width="1" stroke-dasharray="3 3" fill="none"/><rect x="788" y="123" width="160" height="1" fill="#00ff00"/><rect x="788" y="135" width="296" height="1" fill="#dc143c"/><rect x="788" y="147" width="368" height="1" fill="#ff0000"/><rect x="788" y="159" width="400" height="1" fill="#ffff00"/><rect x="788" y="171" width="328" height="1" fill="#ff0000"/><rect x="788" y="183" width="248" height="1" fill="#b01060"/><rect x="788" y="195" width="160" height="1" fill="#800080"/><rect x="788" y="208" width="24" height="1" fill="#0000ff"/><rect x="788" y="220" width="24" height="1" fill="#0000ff"/><rect x="788" y="232" width="24" height="1" fill="#00ff00"/><rect x="788" y="244" width="56" height="1" fill="#0000ff"/><rect x="788" y="256" width="72" height="1" fill="#0000ff"/><rect x="788" y="268" width="72" height="1" fill="#0000ff"/><rect x="788" y="280" width="96" height="1" fill="#4000e0"/><rect x="788" y="292" width="136" height="1" fill="#6000b0"/><rect x="788" y="304" width="208" height="1" fill="#a00070"/><rect x="788" y="317" width="304" height="1" fill="#dc143c"/><rect x="788" y="329" width="360" height="1" fill="#ffff00"/><rect x="788" y="341" width="272" height="1" fill="#dc143c"/><rect x="788" y="353" width="280" height="1" fill="#dc143c"/><rect x="788" y="365" width="240" height="1" fill="#c01048"/><rect x="788" y="377" width="224" height="1" fill="#a00070"/><rect x="788" y="389" width="192" height="1" fill="#800080"/><rect x="788" y="401" width="176" height="1" fill="#800080"/><rect x="788" y="414" width="144" height="1" fill="#4000e0"/><rect x="788" y="426" width="120" height="1" fill="#4000e0"/><rect x="788" y="438" width="56" height="1" fill="#0000ff"/><rect x="788" y="450" width="56" height="1" fill="#0000ff"/><rect x="788" y="462" width="16" height="1" fill="#0000ff"/><rect x="788" y="474" width="16" height="1" fill="#00ff00"/><rect x="788" y="486" width="40" height="1" fill="#0000ff"/><rect x="788" y="498" width="64" height="1" fill="#0000ff"/><rect x="788" y="511" width="88" height="1" fill="#00ff00"/><rect x="788" y="523" width="64" height="1" fill="#0000ff"/><rect x="788" y="535" width="128" height="1" fill="#4000e0"/><rect x="788" y="547" width="160" height="1" fill="#800080"/><rect x="788" y="559" width="200" height="1" fill="#a00070"/><rect x="788" y="571" width="272" height="1" fill="#c01048"/><rect x="788" y="583" width="328" height="1" fill="#ff0000"/><rect x="788" y="595" width="272" height="1" fill="#dc143c"/><rect x="788" y="607" width="184" height="1" fill="#800080"/><rect x="788" y="620" width="232" height="1" fill="#a00070"/><rect x="788" y="632" width="216" height="1" fill="#a00070"/><rect x="788" y="644" width="336" height="1" fill="#ffff00"/><rect x="788" y="656" width="312" height="1" fill="#dc143c"/><rect x="788" y="668" width="256" height="1" fill="#c01048"/><rect x="788" y="680" width="200" height="1" fill="#a00070"/><rect x="788" y="692" width="104" height="1" fill="#4000e0"/><rect x="788" y="704" width="24" height="1" fill="#0000ff"/><rect x="788" y="717" width="8" height="1" fill="#00ff00"/><rect x="4" y="597" width="1203" height="1" fill="#778899"/><path d="M4.5 584V677M5 663.5H7M12.5 640V729M10 659.5H12M13 670.5H15M20.5 666V733M18 669.5H20M21 698.5H23M28.5 640V708M26 698.5H28M29 691.5H31M36.5 653V704M34 690.5H36M37 687.5H39M44.5 649V721M42 687.5H44M45 653.5H47M52.5 614V668M50 653.5H52M53 618.5H55M60.5 544V628M58 616.5H60M61 578.5H63M68.5 561V627M66 578.5H68M69 563.5H71M76.5 562V617M74 564.5H76M77 575.5H79M84.5 542V600M82 575.5H84M85 550.5H87M92.5 537V590M90 550.5H92M93 579.5H95M100.5 560V597M98 579.5H100M101 566.5H103M108.5 563V613M106 567.5H108M109 606.5H111M116.5 566V621M114 606.5H116M117 595.5H119M124.5 585V639M122 595.5H124M125 606.5H127M132.5 575V624M130 606.5H132M133 608.5H135M140.5 573V613M138 608.5H140M141 596.5H143M148.5 592V627M146 596.5H148M149 620.5H151M156.5 619V655M154 620.5H156M157 632.5H159M164.5 602V660M162 632.5H164M165 643.5H167M172.5 601V647M170 643.5H172M173 602.5H175M180.5 602V641M178 602.5H180M181 628.5H183M188.5 617V695M186 628.5H188M189 670.5H191M196.5 598V678M194 670.5H196M197 600.5H199M204.5 569V623M202 601.5H204M205 612.5H207M212.5 608V654M210 612.5H212M213 626.5H215M220.5 588V633M218 628.5H220M221 591.5H223M228.5 581V609M226 591.5H228M229 593.5H231M236.5 580V628M234 593.5H236M237 622.5H239M244.5 575V631M242 624.5H244M245 578.5H247M252.5 551V599M250 578.5H252M253 555.5H255M260.5 547V572M258 555.5H260M261 555.5H263M268.5 539V585M266 545.5H268M269 573.5H271M276.5 544V584M274 573.5H276M277 555.5H279M284.5 515V588M282 555.5H284M285 522.5H287M292.5 472V527M290 520.5H292M293 488.5H295M300.5 479V510M298 488.5H300M301 494.5H303M308.5 452V493M306 492.5H308M309 458.5H311M316.5 397V464M314 452.5H316M317 456.5H319M324.5 429V589M322 456.5H324M325 506.5H327M332.5 395V511M330 510.5H332M333 395.5H335M340.5 321V418M338 395.5H340M341 325.5H343M348.5 312V433M346 325.5H348M349 401.5H351M356.5 391V449M354 400.5H356M357 412.5H359M364.5 373V456M362 407.5H364M365 383.5H367M372.5 282V397M370 383.5H372M373 327.5H375M380.5 282V384M378 328.5H380M381 355.5H383M388.5 282V373M386 354.5H388M389 307.5H391M396.5 282V334M394 307.5H396M397 307.5H399M404.5 282V326M402 307.5H404M405 312.5H407M412.5 282V313M410 312.5H412M413 310.5H415M420.5 309V460M418 309.5H420M421 443.5H423M428.5 443V568M426 445.5H428M429 544.5H431M436.5 532V854M434 545.5H436M437 747.5H439M444.5 693V844M442 741.5H444M445 767.5H447M452.5 673V809M450 772.5H452M453 699.5H455M460.5 652V800M458 700.5H460M461 795.5H463M468.5 719V817M466 797.5H468M469 793.5H471M476.5 680V810M474 795.5H476M477 710.5H479M484.5 633V719M482 710.5H484M485 655.5H487M492.5 533V658M490 655.5H492M493 534.5H495M500.5 492V570M498 532.5H500M501 527.5H503M508.5 477V585M506 527.5H508M509 479.5H511M516.5 458V514M514 479.5H516M517 466.5H519M524.5 399V498M522 466.5H524M525 402.5H527M532.5 324V446M530 402.5H532M533 378.5H535M540.5 310V392M538 383.5H540M541 349.5H543M548.5 324V419M546 349.5H548M549 381.5H551M556.5 322V410M554 378.5H556M557 403.5H559M564.5 364V444M562 403.5H564M565 380.5H567M572.5 336V387M570 380.5H572M573 349.5H575M580.5 314V355M578 349.5H580M581 336.5H583M588.5 332V526M586 342.5H588M589 460.5H591M596.5 398V523M594 461.5H596M597 471.5H599M604.5 365V487M602 470.5H604M605 369.5H607M612.5 341V413M610 366.5H612M613 388.5H615M620.5 259V391M618 388.5H620M621 271.5H623M628.5 216V291M626 271.5H628M629 240.5H631M636.5 187V290M634 240.5H636M637 282.5H639M644.5 184V293M642 282.5H644M645 190.5H647M652.5 180V249M650 182.5H652M653 222.5H655M660.5 184V226M658 222.5H660M661 187.5H663M668.5 157V265M666 187.5H668M669 163.5H671M676.5 60V172M674 164.5H676M677 63.5H679M684.5 55V147M682 61.5H684M685 111.5H687M692.5 93V155M690 111.5H692M693 103.5H695M700.5 44V134M698 103.5H700M701 59.5H703M708.5 46V229M706 57.5H708M709 107.5H711M716.5 94V278M714 107.5H716M717 268.5H719M724.5 96V315M722 269.5H724M725 130.5H727M732.5 126V272M730 130.5H732M733 173.5H735M740.5 156V240M738 173.5H740M741 180.5H743M748.5 106V194M746 181.5H748M749 116.5H751M756.5 79V127M754 116.5H756M757 99.5H759M764.5 86V169M762 99.5H764M765 159.5H767M772.5 140V181M770 145.5H772M773 149.5H775M780.5 148V269M778 148.5H780M781 260.5H783M788.5 175V284M786 260.5H788M789 179.5H791M796.5 130V201M794 175.5H796M797 138.5H799M804.5 119V174M802 138.5H804M805 164.5H807M812.5 117V192M810 169.5H812M813 157.5H815M820.5 151V193M818 157.5H820M821 157.5H823M828.5 138V172M826 157.5H828M829 157.5H831M836.5 122V163M834 148.5H836M837 158.5H839M844.5 121V158M842 142.5H844M845 149.5H847M852.5 143V189M850 149.5H852M853 181.5H855M860.5 137V200M858 181.5H860M861 149.5H863M868.5 117V184M866 151.5H868M869 158.5H871M876.5 155V292M874 158.5H876M877 285.5H879M884.5 250V360M882 280.5H884M885 355.5H887M892.5 325V390M890 355.5H892M893 384.5H895M900.5 338V402M898 384.5H900M901 392.5H903M908.5 291V390M906 387.5H908M909 324.5H911M916.5 255V331M914 324.5H916M917 302.5H919M924.5 289V368M922 302.5H924M925 357.5H927M932.5 349V407M930 357.5H932M933 385.5H935M940.5 362V432M938 390.5H940M941 416.5H943M948.5 363V420M946 414.5H948M949 388.5H951M956.5 330V395M954 391.5H956M957 334.5H959M964.5 302V344M962 334.5H964M965 330.5H967M972.5 310V345M970 331.5H972M973 327.5H975M980.5 305V341M978 327.5H980M981 307.5H983M988.5 295V333M986 307.5H988M989 322.5H991M996.5 314V341M994 322.5H996M997 322.5H999M1004.5 312V427M1002 323.5H1004M1005 417.5H1007M1012.5 390V435M1010 417.5H1012M1013 408.5H1015M1020.5 409V461M1018 414.5H1020M1021 454.5H1023M1028.5 446V522M1026 459.5H1028M1029 505.5H1031M1036.5 488V582M1034 514.5H1036M1037 570.5H1039M1044.5 548V596M1042 573.5H1044M1045 565.5H1047M1052.5 545V608M1050 566.5H1052M1053 597.5H1055M1060.5 523V612M1058 597.5H1060M1061 551.5H1063M1068.5 510V598M1066 551.5H1068M1069 592.5H1071M1076.5 559V603M1074 592.5H1076M1077 582.5H1079M1084.5 577V658M1082 582.5H1084M1085 646.5H1087M1092.5 625V690M1090 646.5H1092M1093 677.5H1095M1100.5 650V712M1098 677.5H1100M1101 692.5H1103M1108.5 634V696M1106 692.5H1108M1109 673.5H1111M1116.5 650V694M1114 674.5H1116M1117 659.5H1119M1124.5 632V683M1122 659.5H1124M1125 646.5H1127M1132.5 647V725M1130 648.5H1132M1133 682.5H1135M1140.5 654V700M1138 684.5H1140M1141 671.5H1143M1148.5 580V680M1146 673.5H1148M1149 589.5H1151M1156.5 561V619M1154 589.5H1156M1157 599.5H1159M1164.5 580V674M1162 598.5H1164M1165 658.5H1167M1172.5 592V665M1170 658.5H1172M1173 624.5H1175M1180.5 587V632M1178 624.5H1180M1181 600.5H1183M1188.5 596V619M1186 601.5H1188M1189 597.5H1191" stroke="#00ff00" stroke-width="1" fill="none"/><rect x="3.5" y="2.5" width="1204" height="872" fill="none" stroke="#fff"/><path d="M1208 13.5H1211M1208 46.5H1211M1208 79.5H1211M1208 112.5H1211M1208 145.5H1211M1208 178.5H1211M1208 211.5H1211M1208 244.5H1211M1208 277.5H1211M1208 310.5H1211M1208 343.5H1211M1208 376.5H1211M1208 409.5H1211M1208 442.5H1211M1208 475.5H1211M1208 508.5H1211M1208 541.5H1211M1208 574.5H1211M1208 607.5H1211M1208 640.5H1211M1208 673.5H1211M1208 706.5H1211M1208 739.5H1211M1208 772.5H1211M1208 805.5H1211M1208 838.5H1211M1208 871.5H1211M4.5 875V879M68.5 875V879M132.5 875V879M196.5 875V879M260.5 875V879M324.5 875V879M388.5 875V879M452.5 875V879M516.5 875V879M580.5 875V879M644.5 875V879M708.5 875V879M772.5 875V879M836.5 875V879M900.5 875V879M964.5 875V879M1028.5 875V879M1092.5 875V879M1156.5 875V879" stroke="#fff" fill="none"/></svg>
<div class="t" style="left:1565px;top:106px;letter-spacing:-0.526px;font-size:10px;color:#fff;">1.12750</div>
<div class="t" style="left:1565px;top:139px;letter-spacing:-0.526px;font-size:10px;color:#fff;">1.10650</div>
<div class="t" style="left:1565px;top:172px;letter-spacing:-0.526px;font-size:10px;color:#fff;">1.08610</div>
<div class="t" style="left:1565px;top:205px;letter-spacing:-0.526px;font-size:10px;color:#fff;">1.06510</div>
<div class="t" style="left:1565px;top:238px;letter-spacing:-0.526px;font-size:10px;color:#fff;">1.04470</div>
<div class="t" style="left:1565px;top:271px;letter-spacing:-0.526px;font-size:10px;color:#fff;">1.02370</div>
<div class="t" style="left:1565px;top:304px;letter-spacing:-0.526px;font-size:10px;color:#fff;">1.00330</div>
<div class="t" style="left:1565px;top:337px;letter-spacing:-0.526px;font-size:10px;color:#fff;">0.98230</div>
<div class="t" style="left:1565px;top:370px;letter-spacing:-0.526px;font-size:10px;color:#fff;">0.96190</div>
<div class="t" style="left:1565px;top:403px;letter-spacing:-0.526px;font-size:10px;color:#fff;">0.94150</div>
<div class="t" style="left:1565px;top:436px;letter-spacing:-0.526px;font-size:10px;color:#fff;">0.92050</div>
<div class="t" style="left:1565px;top:469px;letter-spacing:-0.526px;font-size:10px;color:#fff;">0.90010</div>
<div class="t" style="left:1565px;top:502px;letter-spacing:-0.526px;font-size:10px;color:#fff;">0.87910</div>
<div class="t" style="left:1565px;top:535px;letter-spacing:-0.526px;font-size:10px;color:#fff;">0.85870</div>
<div class="t" style="left:1565px;top:568px;letter-spacing:-0.526px;font-size:10px;color:#fff;">0.83770</div>
<div class="t" style="left:1565px;top:601px;letter-spacing:-0.526px;font-size:10px;color:#fff;">0.81730</div>
<div class="t" style="left:1565px;top:634px;letter-spacing:-0.526px;font-size:10px;color:#fff;">0.79630</div>
<div class="t" style="left:1565px;top:667px;letter-spacing:-0.526px;font-size:10px;color:#fff;">0.77590</div>
<div class="t" style="left:1565px;top:700px;letter-spacing:-0.526px;font-size:10px;color:#fff;">0.75490</div>
<div class="t" style="left:1565px;top:733px;letter-spacing:-0.526px;font-size:10px;color:#fff;">0.73450</div>
<div class="t" style="left:1565px;top:766px;letter-spacing:-0.526px;font-size:10px;color:#fff;">0.71350</div>
<div class="t" style="left:1565px;top:799px;letter-spacing:-0.526px;font-size:10px;color:#fff;">0.69310</div>
<div class="t" style="left:1565px;top:832px;letter-spacing:-0.526px;font-size:10px;color:#fff;">0.67210</div>
<div class="t" style="left:1565px;top:865px;letter-spacing:-0.526px;font-size:10px;color:#fff;">0.65170</div>
<div class="t" style="left:1565px;top:898px;letter-spacing:-0.526px;font-size:10px;color:#fff;">0.63130</div>
<div class="t" style="left:1565px;top:931px;letter-spacing:-0.526px;font-size:10px;color:#fff;">0.61030</div>
<div class="t" style="left:1565px;top:964px;letter-spacing:-0.526px;font-size:10px;color:#fff;">0.58990</div>
<div style="position:absolute;left:1562px;top:690px;width:38px;height:12px;background:#fff;"></div>
<div class="t" style="left:1565px;top:690px;letter-spacing:-0.526px;font-size:10px;color:#000;">0.76142</div>
<div class="t" style="left:357px;top:975px;letter-spacing:-0.266px;font-size:10px;color:#fff;">1 Apr 2004</div>
<div class="t" style="left:421px;top:975px;letter-spacing:-0.573px;font-size:10px;color:#fff;">1 Dec 2004</div>
<div class="t" style="left:485px;top:975px;letter-spacing:-0.403px;font-size:10px;color:#fff;">1 Aug 2005</div>
<div class="t" style="left:549px;top:975px;letter-spacing:-0.266px;font-size:10px;color:#fff;">1 Apr 2006</div>
<div class="t" style="left:613px;top:975px;letter-spacing:-0.573px;font-size:10px;color:#fff;">1 Dec 2006</div>
<div class="t" style="left:677px;top:975px;letter-spacing:-0.403px;font-size:10px;color:#fff;">1 Aug 2007</div>
<div class="t" style="left:741px;top:975px;letter-spacing:-0.266px;font-size:10px;color:#fff;">1 Apr 2008</div>
<div class="t" style="left:805px;top:975px;letter-spacing:-0.573px;font-size:10px;color:#fff;">1 Dec 2008</div>
<div class="t" style="left:869px;top:975px;letter-spacing:-0.403px;font-size:10px;color:#fff;">1 Aug 2009</div>
<div class="t" style="left:933px;top:975px;letter-spacing:-0.266px;font-size:10px;color:#fff;">1 Apr 2010</div>
<div class="t" style="left:997px;top:975px;letter-spacing:-0.573px;font-size:10px;color:#fff;">1 Dec 2010</div>
<div class="t" style="left:1061px;top:975px;letter-spacing:-0.321px;font-size:10px;color:#fff;">1 Aug 2011</div>
<div class="t" style="left:1125px;top:975px;letter-spacing:-0.266px;font-size:10px;color:#fff;">1 Apr 2012</div>
<div class="t" style="left:1189px;top:975px;letter-spacing:-0.573px;font-size:10px;color:#fff;">1 Dec 2012</div>
<div class="t" style="left:1253px;top:975px;letter-spacing:-0.403px;font-size:10px;color:#fff;">1 Aug 2013</div>
<div class="t" style="left:1317px;top:975px;letter-spacing:-0.266px;font-size:10px;color:#fff;">1 Apr 2014</div>
<div class="t" style="left:1381px;top:975px;letter-spacing:-0.573px;font-size:10px;color:#fff;">1 Dec 2014</div>
<div class="t" style="left:1445px;top:975px;letter-spacing:-0.403px;font-size:10px;color:#fff;">1 Aug 2015</div>
<div class="t" style="left:1509px;top:975px;letter-spacing:-0.266px;font-size:10px;color:#fff;">1 Apr 2016</div>
<svg style="left:359px;top:107px" width="8" height="5"><path d="M0 0H7L3.5 4Z" fill="#fff"/></svg>
<div class="t" style="left:371px;top:103px;letter-spacing:-0.294px;font-size:10px;color:#fff;">AUDUSD,Monthly&nbsp; 0.75869 0.76183 0.74886 0.76142</div>
<div style="position:absolute;left:352px;top:994px;width:1248px;height:1px;background:#fff;"></div>
<div class="t" style="left:368px;top:998px;letter-spacing:-0.561px;color:#404040;">CHFJPY,H1</div>
<div style="position:absolute;left:434px;top:995px;width:103px;height:18px;background:#fff;border:1px solid #000;border-top:none;box-sizing:border-box;"></div>
<div class="t" style="left:443px;top:998px;letter-spacing:-0.387px;">AUDUSD,Monthly</div>
<svg style="left:1572px;top:999px" width="30" height="10"><path d="M5 1L1 5L5 9Z" fill="#a0a0a0"/><path d="M21 1L25 5L21 9Z" fill="#a0a0a0"/></svg>
<div style="position:absolute;left:433px;top:165px;width:413px;height:232px;background:#d4d0c8;border-top:1px solid #d4d0c8;border-left:1px solid #d4d0c8;border-right:1px solid #404040;border-bottom:1px solid #404040;box-sizing:border-box;box-shadow:inset 1px 1px 0 #fff,inset -1px -1px 0 #808080;"></div>
<div style="position:absolute;left:437px;top:169px;width:405px;height:18px;background:#0a246a;"></div>
<svg style="left:439px;top:170px" width="17" height="17"><rect x="0.5" y="1.5" width="13" height="10" fill="#e8f0f8" stroke="#6090c0"/><rect x="5.5" y="5.5" width="10" height="10" rx="2" fill="#f2d860" stroke="#b89a30"/><text x="8.5" y="14" font-family="Liberation Serif" font-style="italic" font-weight="bold" font-size="9" fill="#806010">f</text></svg>
<div class="t" style="left:457px;top:171px;letter-spacing:0.333px;font-weight:bold;color:#fff;">Indicators on AUDUSD,Monthly</div>
<div style="position:absolute;left:806px;top:171px;width:16px;height:14px;background:#d4d0c8;border-top:1px solid #fff;border-left:1px solid #fff;border-right:1px solid #404040;border-bottom:1px solid #404040;box-sizing:border-box;box-shadow:inset -1px -1px 0 #808080;"></div>
<div style="position:absolute;left:824px;top:171px;width:16px;height:14px;background:#d4d0c8;border-top:1px solid #fff;border-left:1px solid #fff;border-right:1px solid #404040;border-bottom:1px solid #404040;box-sizing:border-box;box-shadow:inset -1px -1px 0 #808080;"></div>
<div class="t" style="left:810px;top:171px;font-weight:bold;">?</div>
<svg style="left:828px;top:174px" width="9" height="8"><path d="M1 0.5L8 7.5M8 0.5L1 7.5" stroke="#000" stroke-width="1.5"/></svg>
<div style="position:absolute;left:445px;top:196px;width:288px;height:187px;background:#fff;border-top:1px solid #808080;border-left:1px solid #808080;border-right:1px solid #fff;border-bottom:1px solid #fff;box-sizing:border-box;box-shadow:inset 1px 1px 0 #404040;"></div>
<div style="position:absolute;left:455px;top:204px;width:9px;height:9px;background:#fff;border:1px solid #808080;box-sizing:border-box;"></div>
<div style="position:absolute;left:457px;top:208px;width:5px;height:1px;background:#000;"></div>
<svg style="left:472px;top:200px" width="17" height="15"><rect x="0.5" y="0.5" width="15" height="13" rx="1" fill="#fff" stroke="#2060e0"/><rect x="1" y="1" width="14" height="2.5" fill="#2060e0"/><path d="M3 10Q5 4 7 7T13 5" stroke="#6090f0" stroke-width="1.3" fill="none"/></svg>
<div class="t" style="left:493px;top:201px;letter-spacing:-0.042px;">Main chart</div>
<div style="position:absolute;left:480px;top:215px;width:1px;height:11px;border-left:1px dotted #808080;"></div>
<div style="position:absolute;left:481px;top:225px;width:11px;height:1px;border-top:1px dotted #808080;"></div>
<svg style="left:493px;top:217px" width="18" height="18"><rect x="1.5" y="1.5" width="13" height="13" rx="2" fill="url(#gy)" stroke="#c49a28"/><path d="M11.5 4.2Q9.3 3.3 8.4 5.8L7 10.5Q6.3 12.6 4.4 11.6M6 7.4H9.6" stroke="#9a7818" stroke-width="1.3" fill="none"/><path d="M12.4 8.8L16 12.4L12.4 16L8.8 12.4Z" fill="#f4dc60" stroke="#9a7010" stroke-width="1"/></svg>
<div class="t" style="left:515px;top:219px;letter-spacing:-0.305px;">TAS_MT4_MarketMap</div>
<div style="position:absolute;left:740px;top:196px;width:95px;height:23px;background:#d4d0c8;border-top:1px solid #fff;border-left:1px solid #fff;border-right:1px solid #404040;border-bottom:1px solid #404040;box-sizing:border-box;box-shadow:inset -1px -1px 0 #808080;"></div>
<div class="t" style="left:777px;top:201px;letter-spacing:0.010px;color:#a0a0a0;text-shadow:1px 1px 0 #fff;">Edit</div>
<div style="position:absolute;left:740px;top:224px;width:95px;height:23px;background:#d4d0c8;border-top:1px solid #fff;border-left:1px solid #fff;border-right:1px solid #404040;border-bottom:1px solid #404040;box-sizing:border-box;box-shadow:inset -1px -1px 0 #808080;"></div>
<div class="t" style="left:771px;top:229px;letter-spacing:0.037px;color:#a0a0a0;text-shadow:1px 1px 0 #fff;">Delete</div>
<div style="position:absolute;left:740px;top:360px;width:95px;height:23px;border:1px solid #000;box-sizing:border-box;"></div>
<div style="position:absolute;left:741px;top:361px;width:93px;height:21px;background:#d4d0c8;border-top:1px solid #fff;border-left:1px solid #fff;border-right:1px solid #404040;border-bottom:1px solid #404040;box-sizing:border-box;box-shadow:inset -1px -1px 0 #808080;"></div>
<div class="t" style="left:773px;top:365px;letter-spacing:-0.281px;">Close</div>
<svg style="left:8px;top:1021px" width="8" height="7"><path d="M1 0.5L7 6.5M7 0.5L1 6.5" stroke="#000" stroke-width="1.6"/></svg>
<div style="position:absolute;left:5px;top:1033px;width:13px;height:115px;background:#808080;"></div>
<div class="t" style="left:-23px;top:1104px;color:#d4d0c8;transform:rotate(-90deg);width:70px;font-size:11px;letter-spacing:-0.3px;">Terminal</div>
<div style="position:absolute;left:19px;top:1018px;width:1579px;height:110px;background:#fff;border-left:1px solid #808080;border-top:1px solid #808080;box-sizing:border-box;"></div>
<div style="position:absolute;left:20px;top:1019px;width:871px;height:17px;background:#d4d0c8;border-top:1px solid #fff;border-left:1px solid #fff;border-right:1px solid #404040;border-bottom:1px solid #404040;box-sizing:border-box;box-shadow:inset -1px -1px 0 #808080;"></div>
<div style="position:absolute;left:891px;top:1019px;width:560px;height:17px;background:#d4d0c8;border-top:1px solid #fff;border-left:1px solid #fff;border-right:1px solid #404040;border-bottom:1px solid #404040;box-sizing:border-box;box-shadow:inset -1px -1px 0 #808080;"></div>
<div style="position:absolute;left:1451px;top:1019px;width:131px;height:17px;background:#d4d0c8;border-top:1px solid #fff;border-left:1px solid #fff;border-right:1px solid #404040;border-bottom:1px solid #404040;box-sizing:border-box;box-shadow:inset -1px -1px 0 #808080;"></div>
<div class="t" style="left:25px;top:1023px;letter-spacing:-0.205px;">Headline</div>
<div class="t" style="left:898px;top:1023px;letter-spacing:-0.219px;">From</div>
<div class="t" style="left:1556px;top:1023px;letter-spacing:-0.677px;">Time</div>
<div style="position:absolute;left:20px;top:1037px;width:1563px;height:91px;overflow:hidden;">
<div style="position:absolute;left:0px;top:0px;width:1563px;height:20px;background:#eeebee;"></div>
<div style="position:absolute;left:0px;top:19px;width:1563px;height:1px;background:#d4d0c8;"></div>
<svg style="left:2px;top:6px" width="15" height="12"><rect x="0.5" y="0.5" width="13" height="9" rx="1.5" fill="url(#ge)" stroke="#a88a30"/><path d="M1 1.5L7 6L13 1.5M1 9L5 5M13 9L9 5" stroke="#a88a30" fill="none" stroke-width="0.9"/></svg>
<div class="t" style="left:21px;top:4px;letter-spacing:0.605px;font-weight:bold;">Welcome!</div>
<div class="t" style="left:876px;top:4px;letter-spacing:0.488px;font-weight:bold;">MetaQuotes Software Corp.</div>
<div class="t" style="left:1464px;top:4px;letter-spacing:0.684px;font-weight:bold;">2016.06.11 18:33</div>
<div style="position:absolute;left:0px;top:20px;width:1563px;height:20px;background:#fff;"></div>
<div style="position:absolute;left:0px;top:39px;width:1563px;height:1px;background:#d4d0c8;"></div>
<svg style="left:2px;top:26px" width="15" height="12"><rect x="0.5" y="0.5" width="13" height="9" rx="1.5" fill="url(#ge)" stroke="#a88a30"/><path d="M1 1.5L7 6L13 1.5M1 9L5 5M13 9L9 5" stroke="#a88a30" fill="none" stroke-width="0.9"/></svg>
<div class="t" style="left:21px;top:24px;letter-spacing:0.322px;font-weight:bold;">The Built-in Virtual Hosting — Robots and Signals Now Working 24/7</div>
<div class="t" style="left:876px;top:24px;letter-spacing:0.488px;font-weight:bold;">MetaQuotes Software Corp.</div>
<div class="t" style="left:1464px;top:24px;letter-spacing:0.684px;font-weight:bold;">2016.06.11 18:33</div>
<div style="position:absolute;left:0px;top:40px;width:1563px;height:20px;background:#eeebee;"></div>
<div style="position:absolute;left:0px;top:59px;width:1563px;height:1px;background:#d4d0c8;"></div>
<svg style="left:2px;top:46px" width="15" height="12"><rect x="0.5" y="0.5" width="13" height="9" rx="1.5" fill="url(#ge)" stroke="#a88a30"/><path d="M1 1.5L7 6L13 1.5M1 9L5 5M13 9L9 5" stroke="#a88a30" fill="none" stroke-width="0.9"/></svg>
<div class="t" style="left:21px;top:44px;letter-spacing:0.325px;font-weight:bold;">Trading Signals and Copy Trading</div>
<div class="t" style="left:876px;top:44px;letter-spacing:0.488px;font-weight:bold;">MetaQuotes Software Corp.</div>
<div class="t" style="left:1464px;top:44px;letter-spacing:0.684px;font-weight:bold;">2016.06.11 18:33</div>
<div style="position:absolute;left:0px;top:60px;width:1563px;height:20px;background:#fff;"></div>
<div style="position:absolute;left:0px;top:79px;width:1563px;height:1px;background:#d4d0c8;"></div>
<svg style="left:2px;top:66px" width="15" height="12"><rect x="0.5" y="0.5" width="13" height="9" rx="1.5" fill="url(#ge)" stroke="#a88a30"/><path d="M1 1.5L7 6L13 1.5M1 9L5 5M13 9L9 5" stroke="#a88a30" fill="none" stroke-width="0.9"/></svg>
<div class="t" style="left:21px;top:64px;letter-spacing:0.472px;font-weight:bold;">Mobile Trading — Trade from Anywhere at Any Time!</div>
<div class="t" style="left:876px;top:64px;letter-spacing:0.488px;font-weight:bold;">MetaQuotes Software Corp.</div>
<div class="t" style="left:1464px;top:64px;letter-spacing:0.684px;font-weight:bold;">2016.06.11 18:33</div>
<div style="position:absolute;left:0px;top:80px;width:1563px;height:20px;background:#eeebee;"></div>
<div style="position:absolute;left:0px;top:99px;width:1563px;height:1px;background:#d4d0c8;"></div>
<svg style="left:2px;top:86px" width="15" height="12"><rect x="0.5" y="0.5" width="13" height="9" rx="1.5" fill="url(#ge)" stroke="#a88a30"/><path d="M1 1.5L7 6L13 1.5M1 9L5 5M13 9L9 5" stroke="#a88a30" fill="none" stroke-width="0.9"/></svg>
<div class="t" style="left:21px;top:84px;letter-spacing:0.373px;font-weight:bold;">Buy Ready-Made Robots, Magazines and Books in the Market</div>
<div class="t" style="left:876px;top:84px;letter-spacing:0.488px;font-weight:bold;">MetaQuotes Software Corp.</div>
<div class="t" style="left:1464px;top:84px;letter-spacing:0.684px;font-weight:bold;">2016.06.11 18:33</div>
</div>
<div style="position:absolute;left:890px;top:1037px;width:1px;height:91px;background:#d4d0c8;"></div>
<div style="position:absolute;left:1450px;top:1037px;width:1px;height:91px;background:#d4d0c8;"></div>
<div style="position:absolute;left:1584px;top:1019px;width:16px;height:109px;background-color:#d4d0c8;background-image:linear-gradient(45deg,#fff 25%,transparent 25%,transparent 75%,#fff 75%),linear-gradient(45deg,#fff 25%,transparent 25%,transparent 75%,#fff 75%);background-size:2px 2px;background-position:0 0,1px 1px;"></div>
<div style="position:absolute;left:1584px;top:1020px;width:16px;height:16px;background:#d4d0c8;border-top:1px solid #fff;border-left:1px solid #fff;border-right:1px solid #404040;border-bottom:1px solid #404040;box-sizing:border-box;box-shadow:inset -1px -1px 0 #808080;"></div>
<svg style="left:1588px;top:1025px" width="8" height="5"><path d="M0 4.5H7L3.5 0.5Z" fill="#000"/></svg>
<div style="position:absolute;left:1584px;top:1036px;width:16px;height:42px;background:#d4d0c8;border-top:1px solid #fff;border-left:1px solid #fff;border-right:1px solid #404040;border-bottom:1px solid #404040;box-sizing:border-box;box-shadow:inset -1px -1px 0 #808080;"></div>
<div style="position:absolute;left:1584px;top:1111px;width:16px;height:16px;background:#d4d0c8;border-top:1px solid #fff;border-left:1px solid #fff;border-right:1px solid #404040;border-bottom:1px solid #404040;box-sizing:border-box;box-shadow:inset -1px -1px 0 #808080;"></div>
<svg style="left:1588px;top:1117px" width="8" height="5"><path d="M0 0.5H7L3.5 4.5Z" fill="#000"/></svg>
<div style="position:absolute;left:19px;top:1127px;width:1579px;height:1px;background:#000;"></div>
<div class="t" style="left:32px;top:1130px;letter-spacing:-0.086px;color:#404040;">Trade</div>
<div style="position:absolute;left:70px;top:1131px;width:1px;height:10px;background:#404040;"></div>
<div class="t" style="left:80px;top:1130px;letter-spacing:-0.214px;color:#404040;">Exposure</div>
<div style="position:absolute;left:135px;top:1131px;width:1px;height:10px;background:#404040;"></div>
<div class="t" style="left:145px;top:1130px;letter-spacing:-0.076px;color:#404040;">Account History</div>
<div style="position:absolute;left:231px;top:1131px;width:1px;height:10px;background:#404040;"></div>
<div class="t" style="left:240px;top:1130px;letter-spacing:-0.167px;color:#404040;">News</div>
<div style="position:absolute;left:277px;top:1131px;width:1px;height:10px;background:#404040;"></div>
<div class="t" style="left:287px;top:1130px;letter-spacing:-0.025px;color:#404040;">Alerts</div>
<div style="position:absolute;left:325px;top:1127px;width:63px;height:19px;background:#fff;border:1px solid #000;border-top:none;box-sizing:border-box;"></div>
<div class="t" style="left:334px;top:1130px;letter-spacing:-0.151px;">Mailbox</div>
<div class="t" style="left:373px;top:1133px;color:#e00000;font-size:9px;font-weight:bold;">7</div>
<div class="t" style="left:397px;top:1130px;letter-spacing:0.075px;color:#404040;">Market</div>
<div style="position:absolute;left:441px;top:1131px;width:1px;height:10px;background:#404040;"></div>
<div class="t" style="left:451px;top:1130px;letter-spacing:-0.516px;color:#404040;">Signals</div>
<div style="position:absolute;left:494px;top:1131px;width:1px;height:10px;background:#404040;"></div>
<div class="t" style="left:503px;top:1130px;letter-spacing:-0.309px;color:#404040;">Code Base</div>
<div style="position:absolute;left:565px;top:1131px;width:1px;height:10px;background:#404040;"></div>
<div class="t" style="left:574px;top:1130px;letter-spacing:0.115px;color:#404040;">Experts</div>
<div style="position:absolute;left:622px;top:1131px;width:1px;height:10px;background:#404040;"></div>
<div class="t" style="left:632px;top:1130px;letter-spacing:-0.182px;color:#404040;">Journal</div>
<div style="position:absolute;left:677px;top:1131px;width:1px;height:10px;background:#404040;"></div>
<div style="position:absolute;left:3px;top:1150px;width:1597px;height:1px;background:#808080;"></div>
<div style="position:absolute;left:3px;top:1151px;width:1597px;height:1px;background:#fff;"></div>
<div class="t" style="left:5px;top:1158px;letter-spacing:-0.184px;">For Help, press F1</div>
<div style="position:absolute;left:1399px;top:1153px;width:1px;height:17px;background:#808080;"></div>
<div style="position:absolute;left:1400px;top:1153px;width:1px;height:17px;background:#fff;"></div>
<div style="position:absolute;left:1465px;top:1153px;width:1px;height:17px;background:#808080;"></div>
<div style="position:absolute;left:1466px;top:1153px;width:1px;height:17px;background:#fff;"></div>
<svg style="left:1471px;top:1157px" width="24" height="14"><rect x="0" y="0" width="2" height="13" fill="#6a8a18"/><rect x="0" y="10" width="2" height="3" fill="#1a4060"/><rect x="3" y="0" width="2" height="13" fill="#6a8a18"/><rect x="3" y="9" width="2" height="4" fill="#1a4060"/><rect x="6" y="0" width="2" height="13" fill="#6a8a18"/><rect x="6" y="8" width="2" height="5" fill="#1a4060"/><rect x="9" y="0" width="2" height="13" fill="#6a8a18"/><rect x="9" y="7" width="2" height="6" fill="#1a4060"/><rect x="12" y="0" width="2" height="13" fill="#6a8a18"/><rect x="12" y="6" width="2" height="7" fill="#1a4060"/><rect x="15" y="0" width="2" height="13" fill="#6a8a18"/><rect x="15" y="5" width="2" height="8" fill="#1a4060"/><rect x="18" y="0" width="2" height="13" fill="#6a8a18"/><rect x="18" y="4" width="2" height="9" fill="#1a4060"/><rect x="21" y="0" width="2" height="13" fill="#6a8a18"/><rect x="21" y="3" width="2" height="10" fill="#1a4060"/></svg>
<div class="t" style="left:1497px;top:1158px;letter-spacing:0.107px;">226/0 kb</div>
<svg style="left:1585px;top:1157px" width="13" height="13"><path d="M12 1L1 12M12 5L5 12M12 9L9 12" stroke="#808080"/><path d="M12 2L2 12M12 6L6 12M12 10L10 12" stroke="#fff"/></svg>
<div style="position:absolute;left:0px;top:1171px;width:1600px;height:1px;background:#fff;"></div>
<div style="position:absolute;left:2px;top:1174px;width:51px;height:22px;background:#d4d0c8;border-top:1px solid #fff;border-left:1px solid #fff;border-right:1px solid #404040;border-bottom:1px solid #404040;box-sizing:border-box;box-shadow:inset -1px -1px 0 #808080;"></div>
<svg style="left:5px;top:1177px" width="17" height="16"><path d="M1 3Q4 1 8 3V8Q4 6 1 8Z" fill="#e05020"/><path d="M9 3Q12 5 16 3V8Q12 10 9 8Z" fill="#30a030"/><path d="M1 9Q4 7 8 9V14Q4 12 1 14Z" fill="#2060d0"/><path d="M9 9Q12 11 16 9V14Q12 16 9 14Z" fill="#f0c020"/></svg>
<div class="t" style="left:22px;top:1179px;letter-spacing:0.875px;font-weight:bold;">Пуск</div>
<div style="position:absolute;left:58px;top:1174px;width:160px;height:22px;background:#d4d0c8;border-top:1px solid #fff;border-left:1px solid #fff;border-right:1px solid #404040;border-bottom:1px solid #404040;box-sizing:border-box;box-shadow:inset -1px -1px 0 #808080;"></div>
<svg style="left:62px;top:1177px" width="16" height="16"><rect x="0.5" y="0.5" width="15" height="15" fill="#2030c0"/><rect x="3" y="1" width="9" height="5" fill="#fff"/><rect x="2.5" y="9" width="11" height="6" fill="#fff"/><rect x="3" y="11" width="10" height="1" fill="#e03030"/><rect x="3" y="13" width="10" height="1" fill="#e03030"/></svg>
<div class="t" style="left:82px;top:1179px;letter-spacing:0.012px;">Total Commander 8.52a ...</div>
<div style="position:absolute;left:221px;top:1174px;width:160px;height:22px;background-color:#d4d0c8;background-image:linear-gradient(45deg,#fff 25%,transparent 25%,transparent 75%,#fff 75%),linear-gradient(45deg,#fff 25%,transparent 25%,transparent 75%,#fff 75%);background-size:2px 2px;background-position:0 0,1px 1px;border-top:1px solid #404040;border-left:1px solid #404040;border-right:1px solid #fff;border-bottom:1px solid #fff;box-sizing:border-box;"></div>
<svg style="left:226px;top:1178px" width="16" height="16"><rect x="4.5" y="1.5" width="11" height="10" fill="#d8e8f8" stroke="#5080c0"/><circle cx="5" cy="10" r="3" fill="#e09060"/><rect x="1" y="11" width="8" height="5" rx="2" fill="#40a040"/></svg>
<div class="t" style="left:246px;top:1180px;letter-spacing:0.542px;font-weight:bold;">267769: IFCMarkets-...</div>
<div style="position:absolute;left:1491px;top:1178px;width:17px;height:16px;background:#0a246a;"></div>
<div class="t" style="left:1492px;top:1180px;color:#fff;font-size:11px;">EN</div>
<div style="position:absolute;left:1512px;top:1174px;width:1px;height:23px;background:#808080;"></div>
<div style="position:absolute;left:1513px;top:1174px;width:1px;height:23px;background:#fff;"></div>
<div style="position:absolute;left:1518px;top:1174px;width:80px;height:23px;border-top:1px solid #808080;border-left:1px solid #808080;border-right:1px solid #fff;border-bottom:1px solid #fff;box-sizing:border-box;"></div>
<svg style="left:1521px;top:1178px" width="16" height="17"><path d="M7.5 0.5L14 3V8.5Q14 13.5 7.5 16Q1 13.5 1 8.5V3Z" fill="#e02828" stroke="#7080a0" stroke-width="1.2"/><path d="M5 6L10 11M10 6L5 11" stroke="#fff" stroke-width="1.6"/></svg>
<div class="t" style="left:1546px;top:1180px;letter-spacing:-0.167px;">3:46 PM</div>
<div style="position:absolute;left:6px;top:47px;width:3px;height:20px;background-image:repeating-linear-gradient(180deg,#808080 0,#808080 1px,transparent 1px,transparent 2px);"></div>
<div style="position:absolute;left:6px;top:74px;width:3px;height:20px;background-image:repeating-linear-gradient(180deg,#808080 0,#808080 1px,transparent 1px,transparent 2px);"></div>
<div style="position:absolute;left:308px;top:74px;width:3px;height:20px;background-image:repeating-linear-gradient(180deg,#808080 0,#808080 1px,transparent 1px,transparent 2px);"></div>
<div style="position:absolute;left:441px;top:47px;width:3px;height:20px;background-image:repeating-linear-gradient(180deg,#808080 0,#808080 1px,transparent 1px,transparent 2px);"></div>
<div style="position:absolute;left:436px;top:44px;width:1px;height:25px;background:#808080;"></div>
<div style="position:absolute;left:437px;top:44px;width:1px;height:25px;background:#fff;"></div>
<div style="position:absolute;left:792px;top:44px;width:1px;height:25px;background:#808080;"></div>
<div style="position:absolute;left:793px;top:44px;width:1px;height:25px;background:#fff;"></div>
<div style="position:absolute;left:304px;top:71px;width:1px;height:25px;background:#808080;"></div>
<div style="position:absolute;left:305px;top:71px;width:1px;height:25px;background:#fff;"></div>
<div style="position:absolute;left:565px;top:71px;width:1px;height:25px;background:#808080;"></div>
<div style="position:absolute;left:566px;top:71px;width:1px;height:25px;background:#fff;"></div>
<svg style="left:14px;top:48px" width="20" height="18"><rect x="1.5" y="1.5" width="14" height="11" rx="1" fill="#f4f8fc" stroke="#3070c0"/><path d="M10 6h4v3h3v4h-3v3h-4v-3h-3v-4h3z" fill="#20d020" stroke="#109010" stroke-width="0.8"/></svg>
<svg style="left:35px;top:56px" width="6" height="4"><path d="M0 0H5L2.5 3Z" fill="#000"/></svg>
<svg style="left:49px;top:48px" width="20" height="18"><rect x="1.5" y="1.5" width="13" height="10" fill="#f4f8fc" stroke="#3070c0"/><rect x="4.5" y="6.5" width="13" height="10" fill="#f4f8fc" stroke="#3070c0"/></svg>
<svg style="left:70px;top:56px" width="6" height="4"><path d="M0 0H5L2.5 3Z" fill="#000"/></svg>
<div style="position:absolute;left:83px;top:47px;width:1px;height:20px;background:#808080;"></div><div style="position:absolute;left:84px;top:47px;width:1px;height:20px;background:#fff;"></div>
<div style="position:absolute;left:88px;top:45px;width:26px;height:23px;background-color:#d4d0c8;background-image:linear-gradient(45deg,#fff 25%,transparent 25%,transparent 75%,#fff 75%),linear-gradient(45deg,#fff 25%,transparent 25%,transparent 75%,#fff 75%);background-size:2px 2px;background-position:0 0,1px 1px;border-top:1px solid #808080;border-left:1px solid #808080;border-right:1px solid #fff;border-bottom:1px solid #fff;box-sizing:border-box;"></div>
<svg style="left:92px;top:48px" width="18" height="18"><rect x="1.5" y="1.5" width="15" height="15" rx="1" fill="#fff" stroke="#3070c0"/><path d="M6 3L9 6H7V9H5V6H3Z" fill="#20b020"/><path d="M12 15L15 12H13V9H11V12H9Z" fill="#f05020"/></svg>
<svg style="left:121px;top:49px" width="17" height="17"><circle cx="8.5" cy="8.5" r="5" fill="none" stroke="#505050" stroke-width="1.3"/><path d="M8.5 1V6M8.5 11V16M1 8.5H6M11 8.5H16" stroke="#505050" stroke-width="1.3"/></svg>
<div style="position:absolute;left:144px;top:45px;width:26px;height:23px;background-color:#d4d0c8;background-image:linear-gradient(45deg,#fff 25%,transparent 25%,transparent 75%,#fff 75%),linear-gradient(45deg,#fff 25%,transparent 25%,transparent 75%,#fff 75%);background-size:2px 2px;background-position:0 0,1px 1px;border-top:1px solid #808080;border-left:1px solid #808080;border-right:1px solid #fff;border-bottom:1px solid #fff;box-sizing:border-box;"></div>
<svg style="left:147px;top:48px" width="20" height="18"><path d="M1 3H6L8 5H14V13H1Z" fill="#f0d870" stroke="#b09030"/><path d="M13 6L14.8 10H19L15.6 12.5L17 17L13 14L9 17L10.4 12.5L7 10H11.2Z" fill="#f8d040" stroke="#b08010" stroke-width="0.7"/></svg>
<div style="position:absolute;left:172px;top:45px;width:26px;height:23px;background-color:#d4d0c8;background-image:linear-gradient(45deg,#fff 25%,transparent 25%,transparent 75%,#fff 75%),linear-gradient(45deg,#fff 25%,transparent 25%,transparent 75%,#fff 75%);background-size:2px 2px;background-position:0 0,1px 1px;border-top:1px solid #808080;border-left:1px solid #808080;border-right:1px solid #fff;border-bottom:1px solid #fff;box-sizing:border-box;"></div>
<svg style="left:176px;top:49px" width="18" height="16"><rect x="0.5" y="0.5" width="16" height="14" rx="1.5" fill="#fff" stroke="#2060c0"/><rect x="1" y="1" width="3" height="13" fill="#3070d0"/><path d="M6 4H14M6 7H14M6 10H14" stroke="#8090b0"/></svg>
<svg style="left:204px;top:48px" width="19" height="19"><rect x="1.5" y="1.5" width="11" height="10" fill="#fff" stroke="#909090"/><circle cx="9" cy="9" r="4.5" fill="#c8dcf0" stroke="#4080c0" stroke-width="1.3"/><path d="M12 12L17 17" stroke="#d0a020" stroke-width="2.2"/></svg>
<div style="position:absolute;left:229px;top:47px;width:1px;height:20px;background:#808080;"></div><div style="position:absolute;left:230px;top:47px;width:1px;height:20px;background:#fff;"></div>
<svg style="left:238px;top:47px" width="19" height="20"><path d="M1.5 1.5H9L12.5 5V15H1.5Z" fill="#fff" stroke="#707070"/><path d="M3 6H10M3 8.5H10M3 11H8" stroke="#909090"/><path d="M10 9h3v3h3v3h-3v3h-3v-3h-3v-3h3z" fill="#20d020" stroke="#109010" stroke-width="0.8"/></svg>
<div class="t" style="left:257px;top:50px;letter-spacing:-0.023px;">New Order</div>
<svg style="left:320px;top:48px" width="18" height="18"><path d="M1.5 10L7 2.5L16 8.5L11 16Z" fill="#e8b030" stroke="#9a6a10"/><path d="M3 9.5L7.5 4L14.5 8.5L10.5 13Z" fill="#f8e070"/><path d="M11 16L16.5 9V11L12 17Z" fill="#c89020"/></svg>
<div style="position:absolute;left:346px;top:45px;width:90px;height:23px;background-color:#d4d0c8;background-image:linear-gradient(45deg,#fff 25%,transparent 25%,transparent 75%,#fff 75%),linear-gradient(45deg,#fff 25%,transparent 25%,transparent 75%,#fff 75%);background-size:2px 2px;background-position:0 0,1px 1px;border-top:1px solid #808080;border-left:1px solid #808080;border-right:1px solid #fff;border-bottom:1px solid #fff;box-sizing:border-box;"></div>
<svg style="left:349px;top:47px" width="19" height="19"><path d="M3 8L15 8L13 15L5 15Z" fill="#f0d050" stroke="#b09020" stroke-width="0.8"/><ellipse cx="9" cy="7" rx="8" ry="3" fill="#40a0e0" stroke="#2070b0" stroke-width="0.8"/><ellipse cx="9" cy="5" rx="4.5" ry="3.5" fill="#70c0f0"/><circle cx="13" cy="13" r="4.5" fill="#20b020" stroke="#108010" stroke-width="0.6"/><path d="M11.5 10.8L15.3 13L11.5 15.2Z" fill="#fff"/></svg>
<div class="t" style="left:369px;top:50px;letter-spacing:0.044px;">AutoTrading</div>
<div style="position:absolute;left:446px;top:45px;width:26px;height:23px;background-color:#d4d0c8;background-image:linear-gradient(45deg,#fff 25%,transparent 25%,transparent 75%,#fff 75%),linear-gradient(45deg,#fff 25%,transparent 25%,transparent 75%,#fff 75%);background-size:2px 2px;background-position:0 0,1px 1px;border-top:1px solid #808080;border-left:1px solid #808080;border-right:1px solid #fff;border-bottom:1px solid #fff;box-sizing:border-box;"></div>
<svg style="left:450px;top:48px" width="18" height="17"><path d="M3.5 2V15.5M1 14.5H16" stroke="#505050" fill="none"/><path d="M1.5 4L3.5 1.5L5.5 4M14 12.5L16.5 14.5L14 16.5" stroke="#505050" fill="none"/><path d="M9 5V13M7 6H9M9 11H11" stroke="#10a010" stroke-width="1.3"/></svg>
<svg style="left:479px;top:48px" width="18" height="17"><path d="M3.5 2V15.5M1 14.5H16" stroke="#505050" fill="none"/><path d="M1.5 4L3.5 1.5L5.5 4M14 12.5L16.5 14.5L14 16.5" stroke="#505050" fill="none"/><rect x="7.5" y="4.5" width="4" height="7" fill="#20c020" stroke="#108010"/><path d="M9.5 2V4M9.5 12V14" stroke="#108010"/></svg>
<svg style="left:507px;top:48px" width="18" height="17"><path d="M3.5 2V15.5M1 14.5H16" stroke="#505050" fill="none"/><path d="M1.5 4L3.5 1.5L5.5 4M14 12.5L16.5 14.5L14 16.5" stroke="#505050" fill="none"/><path d="M4 12Q8 3 11 8T16 11" stroke="#10a010" stroke-width="1.2" fill="none"/></svg>
<div style="position:absolute;left:531px;top:47px;width:1px;height:20px;background:#808080;"></div><div style="position:absolute;left:532px;top:47px;width:1px;height:20px;background:#fff;"></div>
<svg style="left:539px;top:48px" width="19" height="19"><circle cx="7" cy="7" r="5.5" fill="#e0f0ff" stroke="#2070d0" stroke-width="1.8"/><path d="M4 7H10M7 4V10" stroke="#2070d0" stroke-width="1.8"/><path d="M11 11L17 17" stroke="#d0a020" stroke-width="2.6"/></svg>
<svg style="left:567px;top:48px" width="19" height="19"><circle cx="7" cy="7" r="5.5" fill="#e0f0ff" stroke="#2070d0" stroke-width="1.8"/><path d="M4 7H10" stroke="#2070d0" stroke-width="1.8"/><path d="M11 11L17 17" stroke="#d0a020" stroke-width="2.6"/></svg>
<svg style="left:595px;top:48px" width="18" height="17"><rect x="0.5" y="0.5" width="8" height="7" fill="#30a030"/><rect x="9.5" y="0.5" width="8" height="7" fill="#3070d0"/><rect x="0.5" y="8.5" width="8" height="7" fill="#3070d0"/><rect x="9.5" y="8.5" width="8" height="7" fill="#30a030"/><path d="M2 3H7M11 3H16M2 11H7M11 11H16" stroke="#fff"/></svg>
<div style="position:absolute;left:621px;top:47px;width:1px;height:20px;background:#808080;"></div><div style="position:absolute;left:622px;top:47px;width:1px;height:20px;background:#fff;"></div>
<div style="position:absolute;left:626px;top:45px;width:26px;height:23px;background-color:#d4d0c8;background-image:linear-gradient(45deg,#fff 25%,transparent 25%,transparent 75%,#fff 75%),linear-gradient(45deg,#fff 25%,transparent 25%,transparent 75%,#fff 75%);background-size:2px 2px;background-position:0 0,1px 1px;border-top:1px solid #808080;border-left:1px solid #808080;border-right:1px solid #fff;border-bottom:1px solid #fff;box-sizing:border-box;"></div>
<svg style="left:630px;top:48px" width="18" height="17"><path d="M3.5 2V15.5M1 14.5H16" stroke="#505050" fill="none"/><path d="M1.5 4L3.5 1.5L5.5 4M14 12.5L16.5 14.5L14 16.5" stroke="#505050" fill="none"/><path d="M9 5L14 9L9 13Z" fill="#20b020"/></svg>
<svg style="left:660px;top:48px" width="18" height="17"><path d="M3.5 2V15.5M1 14.5H16" stroke="#505050" fill="none"/><path d="M1.5 4L3.5 1.5L5.5 4M14 12.5L16.5 14.5L14 16.5" stroke="#505050" fill="none"/><path d="M10.5 2V14" stroke="#2070b0"/><path d="M16 9H12M12 9L14 7M12 9L14 11" stroke="#e04020" stroke-width="1.3"/></svg>
<div style="position:absolute;left:683px;top:47px;width:1px;height:20px;background:#808080;"></div><div style="position:absolute;left:684px;top:47px;width:1px;height:20px;background:#fff;"></div>
<svg style="left:692px;top:47px" width="18" height="19"><path d="M1.5 1.5H9L12.5 5V14H1.5Z" fill="#fff" stroke="#707070"/><path d="M7 9h3v3h3v3h-3v3h-3v-3h-3v-3h3z" fill="#20d020" stroke="#109010" stroke-width="0.8"/></svg>
<svg style="left:711px;top:56px" width="6" height="4"><path d="M0 0H5L2.5 3Z" fill="#000"/></svg>
<svg style="left:726px;top:48px" width="18" height="18"><circle cx="8.5" cy="8.5" r="7.5" fill="#2060d0"/><circle cx="8.5" cy="8.5" r="5.5" fill="#fff"/><path d="M8.5 4V8.5H12" stroke="#000" stroke-width="1.2" fill="none"/></svg>
<svg style="left:746px;top:56px" width="6" height="4"><path d="M0 0H5L2.5 3Z" fill="#000"/></svg>
<svg style="left:761px;top:49px" width="18" height="16"><rect x="0.5" y="0.5" width="16" height="14" fill="#fff" stroke="#3070c0"/><rect x="1" y="1" width="16" height="2" fill="#3070c0"/><path d="M3 8L7 6L10 7L14 5M3 12L7 10L10 11L14 9" stroke="#d04040" fill="none"/></svg>
<svg style="left:781px;top:56px" width="6" height="4"><path d="M0 0H5L2.5 3Z" fill="#000"/></svg>
<svg style="left:1550px;top:49px" width="14" height="15"><circle cx="8.5" cy="5.5" r="4" fill="none" stroke="#2060e0" stroke-width="1.6"/><path d="M6 8L1.5 13" stroke="#2060e0" stroke-width="2.2"/></svg>
<svg style="left:1577px;top:49px" width="22" height="16"><ellipse cx="14.5" cy="5" rx="6.5" ry="4.5" fill="#e8e8e8" stroke="#909090" stroke-width="0.8"/><ellipse cx="6" cy="10" rx="5" ry="3.5" fill="#f0f0f0" stroke="#909090" stroke-width="0.8"/></svg>
<div style="position:absolute;left:12px;top:72px;width:26px;height:23px;background-color:#d4d0c8;background-image:linear-gradient(45deg,#fff 25%,transparent 25%,transparent 75%,#fff 75%),linear-gradient(45deg,#fff 25%,transparent 25%,transparent 75%,#fff 75%);background-size:2px 2px;background-position:0 0,1px 1px;border-top:1px solid #808080;border-left:1px solid #808080;border-right:1px solid #fff;border-bottom:1px solid #fff;box-sizing:border-box;"></div>
<svg style="left:19px;top:76px" width="12" height="15"><path d="M1 1V12L4 9L7 14L9 13L6.5 8.5H10.5Z" fill="#404040"/></svg>
<svg style="left:45px;top:76px" width="16" height="16"><path d="M7.5 1V6M7.5 9V15M1 7.5H6M9 7.5H15" stroke="#505050"/></svg>
<div style="position:absolute;left:69px;top:74px;width:1px;height:20px;background:#808080;"></div><div style="position:absolute;left:70px;top:74px;width:1px;height:20px;background:#fff;"></div>
<div style="position:absolute;left:86px;top:77px;width:1px;height:13px;background:#404040;"></div>
<div style="position:absolute;left:109px;top:84px;width:12px;height:1px;background:#404040;"></div>
<svg style="left:136px;top:77px" width="14" height="14"><path d="M1 13L13 1" stroke="#404040" stroke-width="1.1"/></svg>
<svg style="left:162px;top:75px" width="18" height="18"><path d="M1 12L12 3M3 14L14 5M5 4L3 12M9 2L7 10M13 4L11 11" stroke="#404040" stroke-width="0.9"/><text x="11" y="17" font-size="7" font-family="Liberation Sans" font-weight="bold" fill="#404040">E</text></svg>
<svg style="left:191px;top:76px" width="18" height="17"><path d="M1 1.5H13M1 4.5H13M1 7.5H13M1 10.5H10" stroke="#505050" stroke-dasharray="1 1"/><text x="10" y="16" font-size="7" font-family="Liberation Sans" font-weight="bold" fill="#404040">F</text></svg>
<div class="t" style="left:222px;top:78px;font-weight:bold;font-size:12px;color:#606060;">A</div>
<svg style="left:248px;top:76px" width="16" height="16"><rect x="1.5" y="1.5" width="12" height="12" fill="none" stroke="#606060" stroke-dasharray="1 1"/><path d="M4 4H11M7.5 4V12" stroke="#404040" stroke-width="1.6"/></svg>
<svg style="left:277px;top:76px" width="14" height="15"><path d="M3 1L7 4L3 7Z" fill="#404040"/><path d="M2 6L5 9L10 3" stroke="#404040" stroke-width="1.3" fill="none"/><path d="M9 8L13 11L9 14L5 11Z" fill="#404040"/></svg>
<svg style="left:293px;top:83px" width="6" height="4"><path d="M0 0H5L2.5 3Z" fill="#000"/></svg>
<div class="t" style="left:319px;top:79px;color:#404040;">M1</div>
<div class="t" style="left:347px;top:79px;color:#404040;">M5</div>
<div class="t" style="left:373px;top:79px;color:#404040;">M15</div>
<div class="t" style="left:401px;top:79px;color:#404040;">M30</div>
<div class="t" style="left:432px;top:79px;color:#404040;">H1</div>
<div class="t" style="left:459px;top:79px;color:#404040;">H4</div>
<div class="t" style="left:488px;top:79px;color:#404040;">D1</div>
<div class="t" style="left:515px;top:79px;color:#404040;">W1</div>
<div style="position:absolute;left:538px;top:72px;width:26px;height:23px;background-color:#d4d0c8;background-image:linear-gradient(45deg,#fff 25%,transparent 25%,transparent 75%,#fff 75%),linear-gradient(45deg,#fff 25%,transparent 25%,transparent 75%,#fff 75%);background-size:2px 2px;background-position:0 0,1px 1px;border-top:1px solid #808080;border-left:1px solid #808080;border-right:1px solid #fff;border-bottom:1px solid #fff;box-sizing:border-box;"></div>
<div class="t" style="left:542px;top:79px;color:#404040;">MN</div>
<div class="t" style="left:237px;top:1142px;font-family:&quot;Liberation Serif&quot;,serif;font-style:italic;font-size:28px;line-height:36px;color:#f02a3a;letter-spacing:2.92px;-webkit-text-stroke:0.7px #f02a3a;text-shadow:0 0 3px #fff,0 0 4px #fff,1px 2px 4px rgba(0,0,0,0.3);transform:scaleX(1.2);transform-origin:0 0;">www.forex-warez.com, andreybbrv@gmail.com, Skype: andreybbrv</div>
</body></html>
